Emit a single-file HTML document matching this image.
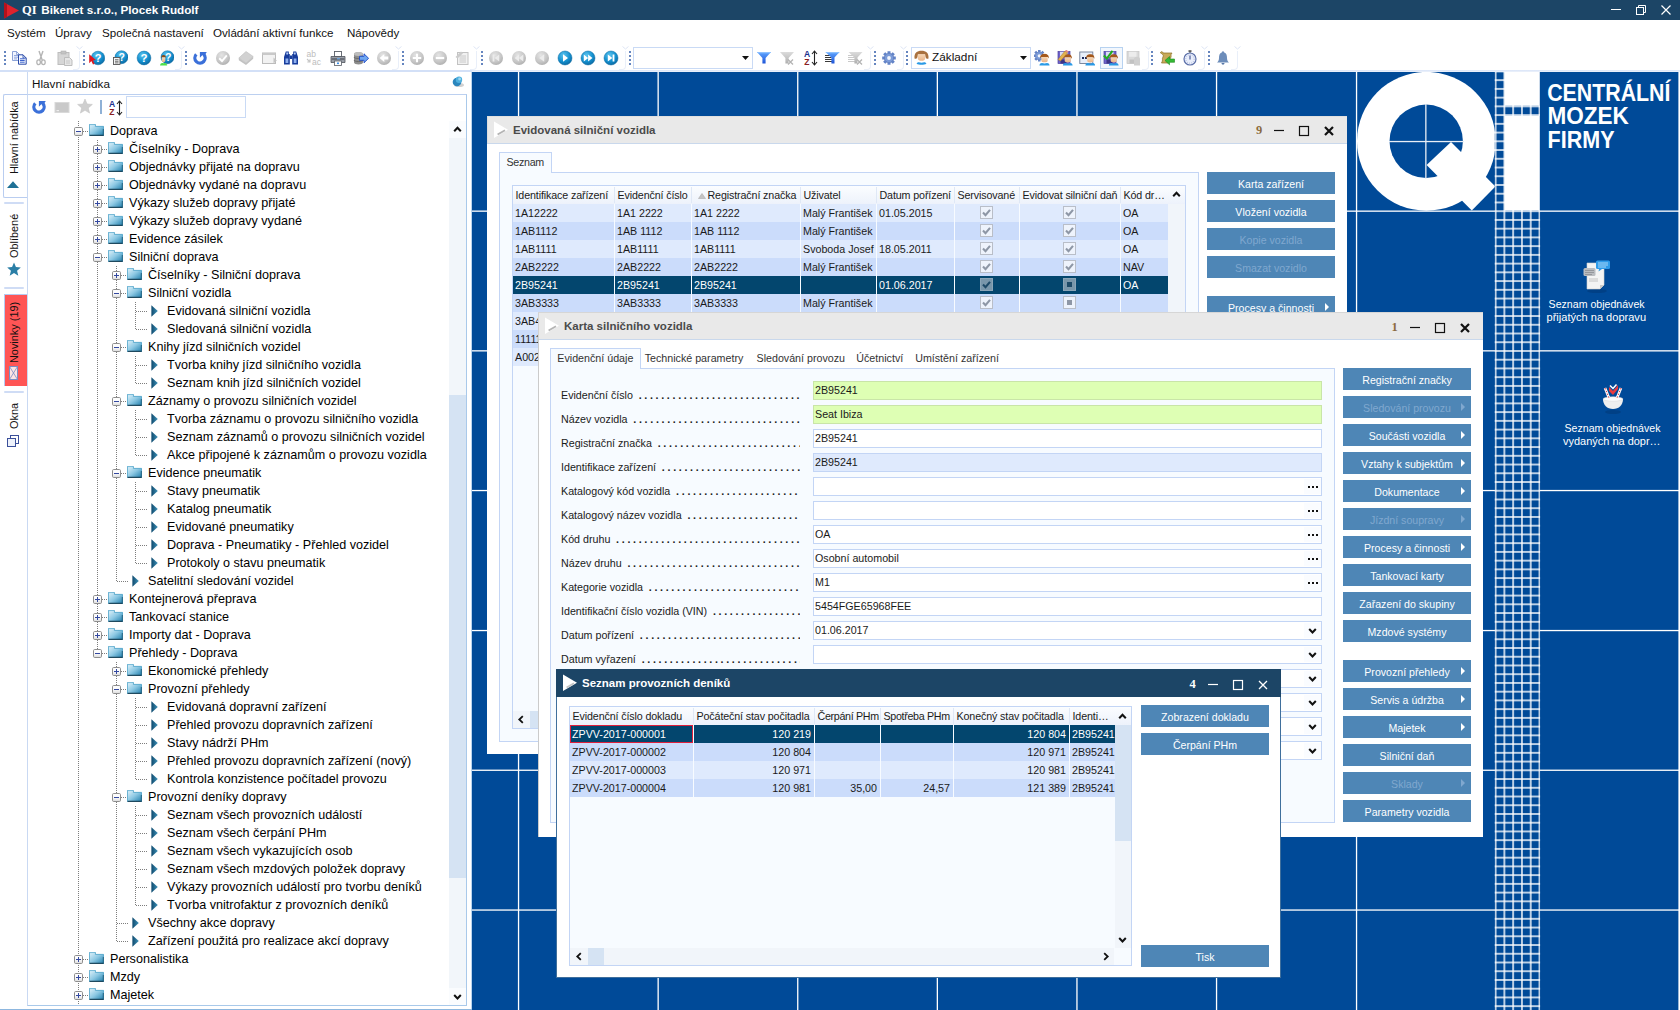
<!DOCTYPE html>
<html><head><meta charset="utf-8"><title>QI</title>
<style>
*{box-sizing:border-box;margin:0;padding:0}
html,body{width:1680px;height:1010px;overflow:hidden;background:#fff}
body{font-family:"Liberation Sans",sans-serif;font-size:10.7px;color:#1a1a1a;position:relative}
.a{position:absolute}
.t{position:absolute;white-space:pre;line-height:1}
.sf{font-family:"Liberation Serif",serif}
.tree .t{font-size:12.6px;color:#000}
.btn{position:absolute;background:#4e86b6;color:#fff;font-size:10.6px;text-align:center;height:22px;line-height:25px;width:128px;white-space:pre}
.btn.dis{color:#80a8cf}
.btn i{position:absolute;right:6px;top:6.5px;width:0;height:0;border-left:4.5px solid #fff;border-top:4.5px solid transparent;border-bottom:4.5px solid transparent}
.btn.dis i{border-left-color:#80a8cf}
.fld{position:absolute;height:19px;border:1px solid #c3d5f5;background:#fff;font-size:10.7px;line-height:16px;padding-left:1px;white-space:pre}
.lbl{position:absolute;font-size:10.7px;white-space:pre;line-height:1}
.cell{position:absolute;height:18px;line-height:18px;font-size:10.7px;white-space:pre;overflow:hidden}
.hd{position:absolute;height:18px;line-height:18px;font-size:10.7px;white-space:pre;overflow:hidden;color:#1a1a1a;letter-spacing:-0.12px}
</style></head><body>

<div class="a" style="left:0;top:0;width:1680px;height:20px;background:#1c4566"></div>
<svg class="a" style="left:2px;top:1px" width="18" height="18" viewBox="0 0 18 18"><path d="M2 1.5 L17 9.5 L2 17.5 Z" fill="#e0222c"/><path d="M2 1.5 L5 3 L5 16 L2 17.5Z" fill="#b5121c"/></svg>
<div class="t" style="left:22px;top:3.5px;font-size:12.5px;font-weight:700;color:#fff;font-family:'Liberation Serif',serif">QI</div>
<div class="t" style="left:41.3px;top:4px;font-size:11.7px;font-weight:700;color:#fff">Bikenet s.r.o., Plocek Rudolf</div>
<svg class="a" style="left:1605px;top:0" width="75" height="20" viewBox="0 0 75 20" fill="none" stroke="#fff" stroke-width="1"><path d="M6 9.5 H16"/><rect x="31.5" y="7.5" width="7" height="7"/><path d="M33.5 7.5 V5.5 H40.5 V12.5 H38.5"/><path d="M56.5 5.5 L65.5 14.5 M65.5 5.5 L56.5 14.5" stroke-width="1.2"/></svg>
<div class="t" style="left:7px;top:27px;font-size:11.6px;color:#111">Systém</div>
<div class="t" style="left:55px;top:27px;font-size:11.6px;color:#111">Úpravy</div>
<div class="t" style="left:102px;top:27px;font-size:11.6px;color:#111">Společná nastavení</div>
<div class="t" style="left:213px;top:27px;font-size:11.6px;color:#111">Ovládání aktivní funkce</div>
<div class="t" style="left:347px;top:27px;font-size:11.6px;color:#111">Nápovědy</div>
<svg width="0" height="0" style="position:absolute"><defs><radialGradient id="hb" cx="0.4" cy="0.3" r="0.8"><stop offset="0" stop-color="#5cc3ee"/><stop offset="0.55" stop-color="#1390cf"/><stop offset="1" stop-color="#0a5f96"/></radialGradient><radialGradient id="gb" cx="0.4" cy="0.3" r="0.8"><stop offset="0" stop-color="#e4e4e4"/><stop offset="0.6" stop-color="#c6c6c6"/><stop offset="1" stop-color="#a9a9a9"/></radialGradient><linearGradient id="fb" x1="0" y1="0" x2="0" y2="1"><stop offset="0" stop-color="#5fa5ff"/><stop offset="1" stop-color="#1f55d8"/></linearGradient><linearGradient id="fgr" x1="0" y1="0" x2="0" y2="1"><stop offset="0" stop-color="#dcdcdc"/><stop offset="1" stop-color="#b0b0b0"/></linearGradient><linearGradient id="skin" x1="0" y1="0" x2="0" y2="1"><stop offset="0" stop-color="#f7d7b5"/><stop offset="1" stop-color="#e8b48a"/></linearGradient><symbol id="usr" viewBox="0 0 12 14"><path d="M1.2 5.5 C0.8 2 3 0.3 6 0.3 C9 0.3 11.2 2 10.8 5.5 L9.5 4 H2.5 Z" fill="#a4581c"/><path d="M2.4 3.8 H9.6 V8 C9.6 10.4 2.4 10.4 2.4 8 Z" fill="url(#skin)"/><path d="M0.3 13.3 C0.8 10.4 3 10 6 11.3 C9 10 11.2 10.4 11.7 13.3 Z" fill="#2a9ae6"/></symbol></defs></svg>
<div class="a" style="left:0;top:70px;width:1680px;height:2px;background:linear-gradient(#d9e4f8,#edf2fb)"></div>
<div class="a" style="left:4px;top:51px;width:2px;height:2px;background:#6585bf;box-shadow:0 4px 0 #6585bf,0 8px 0 #6585bf,0 12px 0 #6585bf"></div>
<svg class="a" style="left:9.0px;top:50.0px" width="20" height="16" viewBox="0 0 20 16"><path d="M3.5 1.5 H7.5 L10.5 4.5 V10.5 H3.5 Z" fill="#f1f5ff" stroke="#7f98d2" stroke-width="0.9"/><path d="M7.5 1.5 V4.5 H10.5" fill="none" stroke="#7f98d2" stroke-width="0.8"/><path d="M5 5.5 H9 M5 7.2 H9 M5 8.9 H8" stroke="#8aa2da" stroke-width="0.9"/><path d="M9.5 4.8 H14 L17.2 8 V14.2 H9.5 Z" fill="#f6f9ff" stroke="#2a4aa8" stroke-width="1"/><path d="M14 4.8 V8 H17.2" fill="none" stroke="#2a4aa8" stroke-width="0.8"/><path d="M11 8.8 H15.7 M11 10.5 H15.7 M11 12.2 H15.7" stroke="#3b62cc" stroke-width="1"/></svg>
<svg class="a" style="left:33.0px;top:50.0px" width="16" height="16" viewBox="0 0 16 16"><path d="M6 1 L9.2 10 M10 1 L6.8 10" stroke="#b5b5b5" stroke-width="1.4" fill="none"/><ellipse cx="5.6" cy="12.3" rx="1.8" ry="2.4" fill="none" stroke="#b5b5b5" stroke-width="1.3"/><ellipse cx="10.4" cy="12.3" rx="1.8" ry="2.4" fill="none" stroke="#b5b5b5" stroke-width="1.3"/></svg>
<svg class="a" style="left:57.0px;top:50.0px" width="16" height="16" viewBox="0 0 16 16"><rect x="1" y="2.5" width="11" height="12" fill="#d6d6d6" stroke="#bdbdbd"/><rect x="4" y="1" width="5" height="3" fill="#c4c4c4" stroke="#b0b0b0" stroke-width="0.6"/><path d="M7.5 7.5 H12.5 L15 10 V15.5 H7.5 Z" fill="#e6e6e6" stroke="#bdbdbd"/><path d="M9 11 H13 M9 13 H13" stroke="#c4c4c4" stroke-width="0.9"/></svg>
<div class="a" style="left:73px;top:51px;width:7px;height:19px;border-right:1px solid #e9eff9;border-bottom:1px solid #e9eff9;border-radius:0 0 4px 0"></div>
<svg class="a" style="left:76px;top:46px" width="7" height="4"><path d="M0.5 0.5 L3.5 3 L6.5 0.5" fill="none" stroke="#d5e0f2" stroke-width="0.8"/></svg>
<div class="a" style="left:83px;top:51px;width:2px;height:2px;background:#6585bf;box-shadow:0 4px 0 #6585bf,0 8px 0 #6585bf,0 12px 0 #6585bf"></div>
<svg class="a" style="left:89.0px;top:50.0px" width="16" height="16" viewBox="0 0 16 16"><circle cx="9" cy="8" r="6.8" fill="url(#hb)" stroke="#0b6aa3" stroke-width="0.5"/><text x="9" y="12" font-family="Liberation Sans" font-weight="700" font-size="11" fill="#fff" text-anchor="middle">?</text><path d="M0.2 4.2 V13.2 L2.4 11 L4 14.6 L5.6 13.8 L4 10.4 L6.8 10.1 Z" fill="#e3161d"/></svg>
<svg class="a" style="left:112.0px;top:50.0px" width="16" height="16" viewBox="0 0 16 16"><circle cx="9.5" cy="7.2" r="6.5" fill="url(#hb)" stroke="#0b6aa3" stroke-width="0.5"/><text x="9.8" y="11" font-family="Liberation Sans" font-weight="700" font-size="10.5" fill="#fff" text-anchor="middle">?</text><rect x="1.5" y="7.5" width="6.5" height="7" fill="#f4f4f4" stroke="#555" stroke-width="0.9"/><path d="M3 9.7 H6.5 M3 11.3 H6.5 M3 12.9 H6.5" stroke="#555" stroke-width="0.8"/></svg>
<svg class="a" style="left:136.0px;top:50.0px" width="16" height="16" viewBox="0 0 16 16"><circle cx="8" cy="8" r="6.9" fill="url(#hb)" stroke="#0b6aa3" stroke-width="0.5"/><text x="8" y="12.2" font-family="Liberation Sans" font-weight="700" font-size="11.5" fill="#fff" text-anchor="middle">?</text></svg>
<svg class="a" style="left:158.0px;top:50.0px" width="16" height="16" viewBox="0 0 16 16"><circle cx="9.5" cy="7.2" r="6.5" fill="url(#hb)" stroke="#0b6aa3" stroke-width="0.5"/><text x="10.3" y="10.8" font-family="Liberation Sans" font-weight="700" font-size="10.5" fill="#fff" text-anchor="middle">?</text><path d="M2 15.5 C2.3 12.8 4 12.5 5.6 13.2 C7.2 12.5 8.9 12.8 9.2 15.5Z" fill="#4de04a"/><path d="M3.4 8 C3.2 5.6 4.3 5 5.6 5 C6.9 5 8 5.6 7.8 8 L7.2 7.4 H4Z" fill="#8a4a17"/><path d="M3.9 7.3 H7.3 V10.5 C7.3 12.6 3.9 12.6 3.9 10.5Z" fill="url(#skin)"/></svg>
<div class="a" style="left:175px;top:51px;width:7px;height:19px;border-right:1px solid #e9eff9;border-bottom:1px solid #e9eff9;border-radius:0 0 4px 0"></div>
<svg class="a" style="left:178px;top:46px" width="7" height="4"><path d="M0.5 0.5 L3.5 3 L6.5 0.5" fill="none" stroke="#d5e0f2" stroke-width="0.8"/></svg>
<div class="a" style="left:185px;top:51px;width:2px;height:2px;background:#6585bf;box-shadow:0 4px 0 #6585bf,0 8px 0 #6585bf,0 12px 0 #6585bf"></div>
<svg class="a" style="left:192.0px;top:50.0px" width="16" height="16" viewBox="0 0 16 16"><path d="M4.3 4.3 A5.15 5.15 0 1 0 11.6 4.2" fill="none" stroke="#3b70d9" stroke-width="3.3"/><path d="M7.9 1.9 H14.8 L12.5 5.5 L10.5 5 L7.9 7.7 Z" fill="#3b70d9"/></svg>
<svg class="a" style="left:215.0px;top:50.0px" width="16" height="16" viewBox="0 0 16 16"><circle cx="8" cy="8" r="7" fill="url(#gb)"/><path d="M4.2 8.3 L7 11 L11.8 5.3" fill="none" stroke="#fff" stroke-width="1.9"/></svg>
<svg class="a" style="left:238.0px;top:50.0px" width="16" height="16" viewBox="0 0 16 16"><path d="M0.8 8 L8 1.5 L15.2 6.5 L8 13 Z" fill="#d2d2d2" stroke="#bdbdbd" stroke-width="0.6"/><path d="M0.8 8 L8 13 L15.2 6.5 V8.8 L8 15 L0.8 10.2Z" fill="#c2c2c2"/></svg>
<svg class="a" style="left:261.0px;top:50.0px" width="16" height="16" viewBox="0 0 16 16"><rect x="1.5" y="3" width="13" height="10.5" fill="#f2f2f2" stroke="#bcbcbc"/><rect x="1.5" y="3" width="13" height="2" fill="#c9c9c9"/><path d="M12.5 7.5 L15.8 10.5 L12.5 13.5Z" fill="#c4c4c4"/></svg>
<svg class="a" style="left:283.0px;top:50.0px" width="16" height="16" viewBox="0 0 16 16"><path d="M2.8 1.5 H5.8 V4 H6.8 V14.5 H1 V7 Z M10.2 1.5 H13.2 L15 7 V14.5 H9.2 V4 H10.2Z" fill="#173c9c"/><rect x="6.8" y="5.5" width="2.4" height="3.5" fill="#173c9c"/><path d="M2.5 8.5 H5.3 V13 H2.5Z M10.7 8.5 H13.5 V13 H10.7Z" fill="#8fb0ee"/><path d="M3.3 2.5 H5 V4.5 H3.3Z M11 2.5 H12.7 V4.5 H11Z" fill="#b5cbf5"/></svg>
<svg class="a" style="left:306.0px;top:50.0px" width="16" height="16" viewBox="0 0 16 16"><text x="0.5" y="7" font-family="Liberation Sans" font-size="8.5" fill="#bdbdbd">ab</text><text x="6" y="15" font-family="Liberation Sans" font-size="8.5" fill="#bdbdbd">ac</text><path d="M1 9 L4 12 M4 9.3 V12 H1.3" stroke="#c6c6c6" stroke-width="1.1" fill="none"/></svg>
<svg class="a" style="left:330.0px;top:50.0px" width="16" height="16" viewBox="0 0 16 16"><rect x="4.5" y="1.5" width="7" height="5" fill="#fff" stroke="#5a5f68" stroke-width="0.9"/><path d="M1 6.5 H15 V12.5 H1Z" fill="#9a9fa8" stroke="#4f545c" stroke-width="0.8"/><rect x="1.5" y="8" width="13" height="2" fill="#6a6f78"/><rect x="4.5" y="11" width="7" height="4.5" fill="#fff" stroke="#5a5f68" stroke-width="0.8"/><rect x="7" y="12.5" width="2" height="1.6" fill="#3a8ee6"/><rect x="7" y="8.3" width="3" height="1" fill="#6fb6ff"/></svg>
<svg class="a" style="left:353.0px;top:50.0px" width="16" height="16" viewBox="0 0 16 16"><path d="M1 4 C1 1.6 10 1.6 10 4 V12.5 C10 15 1 15 1 12.5Z" fill="#8d8d8d"/><ellipse cx="5.5" cy="4" rx="4.5" ry="1.9" fill="#bdbdbd"/><path d="M1 7 C1 9 10 9 10 7 M1 10 C1 12 10 12 10 10" stroke="#5e5e5e" stroke-width="0.8" fill="none"/><path d="M6.5 6.3 H11 V3.8 L15.6 8.3 L11 12.8 V10.3 H6.5Z" fill="#6ea6f0" stroke="#1d49c6" stroke-width="0.9"/></svg>
<svg class="a" style="left:376.0px;top:50.0px" width="16" height="16" viewBox="0 0 16 16"><circle cx="8" cy="8" r="7" fill="url(#gb)"/><path d="M3.6 8 L8.3 4 V6.4 H12.3 V9.6 H8.3 V12Z" fill="#fff"/></svg>
<div class="a" style="left:392px;top:51px;width:7px;height:19px;border-right:1px solid #e9eff9;border-bottom:1px solid #e9eff9;border-radius:0 0 4px 0"></div>
<svg class="a" style="left:395px;top:46px" width="7" height="4"><path d="M0.5 0.5 L3.5 3 L6.5 0.5" fill="none" stroke="#d5e0f2" stroke-width="0.8"/></svg>
<div class="a" style="left:402px;top:51px;width:2px;height:2px;background:#6585bf;box-shadow:0 4px 0 #6585bf,0 8px 0 #6585bf,0 12px 0 #6585bf"></div>
<svg class="a" style="left:409.0px;top:50.0px" width="16" height="16" viewBox="0 0 16 16"><circle cx="8" cy="8" r="7" fill="url(#gb)"/><path d="M8 3.8 V12.2 M3.8 8 H12.2" stroke="#fff" stroke-width="2"/></svg>
<svg class="a" style="left:432.0px;top:50.0px" width="16" height="16" viewBox="0 0 16 16"><circle cx="8" cy="8" r="7" fill="url(#gb)"/><path d="M3.8 8 H12.2" stroke="#fff" stroke-width="2.2"/></svg>
<svg class="a" style="left:454.0px;top:50.0px" width="16" height="16" viewBox="0 0 16 16"><rect x="3.5" y="2.5" width="10.5" height="12" fill="#f1f1f1" stroke="#c2c2c2"/><path d="M5.5 6 H12 M5.5 8 H12 M5.5 10 H12 M5.5 12 H12" stroke="#c6c6c6" stroke-width="0.9"/><path d="M1.5 7 L7 1.5 L9 3.2 L3.5 8.5Z" fill="#cbcbcb"/></svg>
<div class="a" style="left:470px;top:51px;width:7px;height:19px;border-right:1px solid #e9eff9;border-bottom:1px solid #e9eff9;border-radius:0 0 4px 0"></div>
<svg class="a" style="left:473px;top:46px" width="7" height="4"><path d="M0.5 0.5 L3.5 3 L6.5 0.5" fill="none" stroke="#d5e0f2" stroke-width="0.8"/></svg>
<div class="a" style="left:481px;top:51px;width:2px;height:2px;background:#6585bf;box-shadow:0 4px 0 #6585bf,0 8px 0 #6585bf,0 12px 0 #6585bf"></div>
<svg class="a" style="left:488.0px;top:50.0px" width="16" height="16" viewBox="0 0 16 16"><circle cx="8" cy="8" r="7" fill="url(#gb)"/><g fill="#ececec"><rect x="4.6" y="4.5" width="1.8" height="7"/><path d="M11.2 4.5 L6.6 8 L11.2 11.5Z"/></g></svg>
<svg class="a" style="left:511.0px;top:50.0px" width="16" height="16" viewBox="0 0 16 16"><circle cx="8" cy="8" r="7" fill="url(#gb)"/><g fill="#ececec"><path d="M8 4.5 L3.6 8 L8 11.5Z M12.3 4.5 L7.9 8 L12.3 11.5Z"/></g></svg>
<svg class="a" style="left:534.0px;top:50.0px" width="16" height="16" viewBox="0 0 16 16"><circle cx="8" cy="8" r="7" fill="url(#gb)"/><g fill="#ececec"><path d="M10.2 4.3 L5.2 8 L10.2 11.7Z"/></g></svg>
<svg class="a" style="left:557.0px;top:50.0px" width="16" height="16" viewBox="0 0 16 16"><circle cx="8" cy="8" r="7" fill="url(#hb)" stroke="#0b6aa3" stroke-width="0.5"/><g fill="#fff"><path d="M6 4.3 L11 8 L6 11.7Z"/></g></svg>
<svg class="a" style="left:580.0px;top:50.0px" width="16" height="16" viewBox="0 0 16 16"><circle cx="8" cy="8" r="7" fill="url(#hb)" stroke="#0b6aa3" stroke-width="0.5"/><g fill="#fff"><path d="M3.8 4.5 L8.2 8 L3.8 11.5Z M8.1 4.5 L12.5 8 L8.1 11.5Z"/></g></svg>
<svg class="a" style="left:603.0px;top:50.0px" width="16" height="16" viewBox="0 0 16 16"><circle cx="8" cy="8" r="7" fill="url(#hb)" stroke="#0b6aa3" stroke-width="0.5"/><g fill="#fff"><rect x="9.6" y="4.5" width="1.8" height="7"/><path d="M4.8 4.5 L9.4 8 L4.8 11.5Z"/></g></svg>
<div class="a" style="left:619px;top:51px;width:7px;height:19px;border-right:1px solid #e9eff9;border-bottom:1px solid #e9eff9;border-radius:0 0 4px 0"></div>
<svg class="a" style="left:622px;top:46px" width="7" height="4"><path d="M0.5 0.5 L3.5 3 L6.5 0.5" fill="none" stroke="#d5e0f2" stroke-width="0.8"/></svg>
<div class="a" style="left:629px;top:51px;width:2px;height:2px;background:#6585bf;box-shadow:0 4px 0 #6585bf,0 8px 0 #6585bf,0 12px 0 #6585bf"></div>
<div class="a" style="left:633px;top:47px;width:120px;height:22px;border:1px solid #c9daf5;background:#fff"></div>
<svg class="a" style="left:742px;top:56px" width="7" height="4"><path d="M0 0 H7 L3.5 4Z" fill="#111"/></svg>
<svg class="a" style="left:756.0px;top:50.0px" width="16" height="16" viewBox="0 0 16 16"><path d="M1 2 H15 L9.6 8 V13.5 H6.4 V8Z" fill="url(#fb)"/><path d="M1 2 H15 L14 3.2 H2Z" fill="#8cc0ff"/></svg>
<svg class="a" style="left:779.0px;top:50.0px" width="16" height="16" viewBox="0 0 16 16"><path d="M1 2 H15 L9.6 8 V13.5 H6.4 V8Z" fill="url(#fgr)"/><path d="M9 9.5 L14 14.5 M14 9.5 L9 14.5" stroke="#b3b3b3" stroke-width="1.3"/></svg>
<svg class="a" style="left:804.0px;top:50.0px" width="16" height="16" viewBox="0 0 16 16"><text x="0" y="7.3" font-family="Liberation Sans" font-weight="700" font-size="8.5" fill="#1a2f8c">A</text><text x="0.2" y="15.3" font-family="Liberation Sans" font-weight="700" font-size="8.5" fill="#8a1f1f">Z</text><path d="M10.5 1.5 V14.5 M8 4 L10.5 1 L13 4 M8 12 L10.5 15 L13 12" stroke="#222" stroke-width="1.1" fill="none"/></svg>
<svg class="a" style="left:824.0px;top:50.0px" width="16" height="16" viewBox="0 0 16 16"><path d="M1 5.5 H7 M1 7.5 H7.5 M1 9.5 H8 M1 11.5 H8" stroke="#3a3a3a" stroke-width="1"/><path d="M1.5 2 H15.5 L10.5 7.6 V13.5 H7.4 V7.6Z" fill="url(#fb)"/><path d="M1.5 2 H15.5 L14.5 3.2 H2.5Z" fill="#8cc0ff"/></svg>
<svg class="a" style="left:847.0px;top:50.0px" width="16" height="16" viewBox="0 0 16 16"><path d="M1 5.5 H7 M1 7.5 H7.5 M1 9.5 H8 M1 11.5 H8" stroke="#c9c9c9" stroke-width="1"/><path d="M1.5 2 H15.5 L10.5 7.6 V13.5 H7.4 V7.6Z" fill="url(#fgr)"/><path d="M10 9.5 L15 14.5 M15 9.5 L10 14.5" stroke="#b3b3b3" stroke-width="1.3"/></svg>
<div class="a" style="left:864px;top:51px;width:7px;height:19px;border-right:1px solid #e9eff9;border-bottom:1px solid #e9eff9;border-radius:0 0 4px 0"></div>
<svg class="a" style="left:867px;top:46px" width="7" height="4"><path d="M0.5 0.5 L3.5 3 L6.5 0.5" fill="none" stroke="#d5e0f2" stroke-width="0.8"/></svg>
<div class="a" style="left:874px;top:51px;width:2px;height:2px;background:#6585bf;box-shadow:0 4px 0 #6585bf,0 8px 0 #6585bf,0 12px 0 #6585bf"></div>
<svg class="a" style="left:881.0px;top:50.0px" width="16" height="16" viewBox="0 0 16 16"><circle cx="8" cy="8" r="4.6" fill="#6f8fd0" stroke="#4a66a8" stroke-width="0.8"/><g stroke="#6283c7" stroke-width="3" stroke-linecap="butt"><path d="M8 1.2 V3.6 M8 12.4 V14.8 M1.2 8 H3.6 M12.4 8 H14.8 M3.2 3.2 L4.9 4.9 M11.1 11.1 L12.8 12.8 M3.2 12.8 L4.9 11.1 M11.1 4.9 L12.8 3.2"/></g><circle cx="8" cy="8" r="4.2" fill="#7b9bd8"/><circle cx="8" cy="8" r="1.9" fill="#f2f6fc"/></svg>
<div class="a" style="left:897px;top:51px;width:7px;height:19px;border-right:1px solid #e9eff9;border-bottom:1px solid #e9eff9;border-radius:0 0 4px 0"></div>
<svg class="a" style="left:900px;top:46px" width="7" height="4"><path d="M0.5 0.5 L3.5 3 L6.5 0.5" fill="none" stroke="#d5e0f2" stroke-width="0.8"/></svg>
<div class="a" style="left:906px;top:51px;width:2px;height:2px;background:#6585bf;box-shadow:0 4px 0 #6585bf,0 8px 0 #6585bf,0 12px 0 #6585bf"></div>
<div class="a" style="left:911px;top:47px;width:120px;height:22px;border:1px solid #c9daf5;background:#fff"></div>
<svg class="a" style="left:914px;top:50px" width="15" height="15" viewBox="0 0 15 15"><path d="M0.5 8.5 C0 3 3 0.8 7.5 0.8 C12 0.8 15 3 14.5 8.5 C13 9.3 12 8.5 11.5 7 L11 4.5 H4 L3.5 7 C3 8.5 2 9.3 0.5 8.5Z" fill="#a9713f"/><path d="M3.8 4.3 H11.2 V8.5 C11.2 11.6 3.8 11.6 3.8 8.5Z" fill="url(#skin)"/><path d="M2.5 13.8 C3.5 11.5 5.5 12 7.5 12.8 C9.5 12 11.5 11.5 12.5 13.8 C10 15.2 5 15.2 2.5 13.8Z" fill="#2a9ae6"/></svg>
<div class="t" style="left:932px;top:52px;font-size:11.8px;color:#111">Základní</div>
<svg class="a" style="left:1019.5px;top:56px" width="7" height="4"><path d="M0 0 H7 L3.5 4Z" fill="#111"/></svg>
<svg class="a" style="left:1034.0px;top:50.0px" width="16" height="16" viewBox="0 0 16 16"><g transform="translate(-1.5,-1) scale(0.85)"><circle cx="8" cy="8" r="4.6" fill="#6f8fd0" stroke="#4a66a8" stroke-width="0.8"/><g stroke="#6283c7" stroke-width="3" stroke-linecap="butt"><path d="M8 1.2 V3.6 M8 12.4 V14.8 M1.2 8 H3.6 M12.4 8 H14.8 M3.2 3.2 L4.9 4.9 M11.1 11.1 L12.8 12.8 M3.2 12.8 L4.9 11.1 M11.1 4.9 L12.8 3.2"/></g><circle cx="8" cy="8" r="4.2" fill="#7b9bd8"/><circle cx="8" cy="8" r="1.9" fill="#f2f6fc"/></g><use href="#usr" x="5" y="3.5" width="11" height="12.5"/></svg>
<svg class="a" style="left:1057.0px;top:50.0px" width="16" height="16" viewBox="0 0 16 16"><rect x="1" y="1.5" width="12" height="12" fill="#6f63c9" stroke="#4a3fa0" stroke-width="0.7"/><rect x="3" y="1.8" width="7.5" height="5" fill="#d9dcf5"/><rect x="3.5" y="9.5" width="6" height="4" fill="#3b3486"/><use href="#usr" x="5.5" y="4" width="10.5" height="12"/><path d="M1 9.5 L8 1 L10.5 2.8 L3.5 11Z" fill="#e3b14f" stroke="#a37a26" stroke-width="0.5"/><path d="M8 1 L9.2 -0.3 L11.6 1.5 L10.5 2.8Z" fill="#e58b86"/></svg>
<svg class="a" style="left:1079.0px;top:50.0px" width="16" height="16" viewBox="0 0 16 16"><rect x="0.8" y="2" width="13" height="11.5" fill="#e8eef9" stroke="#6f7c96" stroke-width="0.9"/><rect x="3" y="7" width="2" height="2" fill="#1e2c5e"/><rect x="6" y="7" width="2" height="2" fill="#1e2c5e"/><use href="#usr" x="6" y="4" width="10.5" height="12"/></svg>
<div class="a" style="left:1100px;top:47px;width:23px;height:22px;border:1px solid #b7d2f0;background:#f2f7fd"></div>
<svg class="a" style="left:1103.0px;top:50.0px" width="16" height="16" viewBox="0 0 16 16"><rect x="1" y="1.5" width="12" height="12" fill="#6f63c9" stroke="#4a3fa0" stroke-width="0.7"/><rect x="3" y="1.8" width="7.5" height="5" fill="#d9dcf5"/><rect x="3.5" y="9.5" width="6" height="4" fill="#3b3486"/><use href="#usr" x="5.5" y="4" width="10.5" height="12"/><path d="M0.8 5.5 L3.8 8.5 L9.5 0.8" fill="none" stroke="#1fae1f" stroke-width="2"/></svg>
<svg class="a" style="left:1126.0px;top:50.0px" width="16" height="16" viewBox="0 0 16 16"><rect x="1" y="1.5" width="12" height="12" fill="#dadada" stroke="#c4c4c4" stroke-width="0.7"/><rect x="3" y="1.8" width="7.5" height="5" fill="#ececec"/><rect x="3.5" y="9.5" width="6" height="4" fill="#c2c2c2"/><path d="M8 15.5 V9 C8 6 14 6 14 9 V15.5Z" fill="#cfcfcf"/></svg>
<div class="a" style="left:1142px;top:51px;width:7px;height:19px;border-right:1px solid #e9eff9;border-bottom:1px solid #e9eff9;border-radius:0 0 4px 0"></div>
<svg class="a" style="left:1145px;top:46px" width="7" height="4"><path d="M0.5 0.5 L3.5 3 L6.5 0.5" fill="none" stroke="#d5e0f2" stroke-width="0.8"/></svg>
<div class="a" style="left:1151px;top:51px;width:2px;height:2px;background:#6585bf;box-shadow:0 4px 0 #6585bf,0 8px 0 #6585bf,0 12px 0 #6585bf"></div>
<svg class="a" style="left:1159.0px;top:50.0px" width="16" height="16" viewBox="0 0 16 16"><path d="M1.5 3 C1.5 1 4 1.5 4 3 H13 C11 5 13 6.5 11.5 8 L9 13 H2.5 C4.5 10 2.5 9 4 7 C5 5 3.5 4 1.5 3Z" fill="#c8ab5a" stroke="#8a6e22" stroke-width="0.7"/><path d="M6 10.5 L10.5 6.5 V9 H15.5 V12.3 H10.5 V14.8Z" fill="#35b935" stroke="#1d8a1d" stroke-width="0.6"/></svg>
<svg class="a" style="left:1182.0px;top:50.0px" width="16" height="16" viewBox="0 0 16 16"><rect x="6.5" y="0.3" width="3" height="1.5" fill="#444"/><rect x="7.5" y="1.5" width="1" height="1.5" fill="#444"/><circle cx="8" cy="9" r="6" fill="#e9eefb" stroke="#5b6fa8" stroke-width="1.2"/><circle cx="8" cy="9" r="4.2" fill="none" stroke="#8e9cc9" stroke-width="0.8" stroke-dasharray="0.8 1.4"/><path d="M8 5.5 V9.5" stroke="#2a3f86" stroke-width="1"/></svg>
<div class="a" style="left:1198px;top:51px;width:7px;height:19px;border-right:1px solid #e9eff9;border-bottom:1px solid #e9eff9;border-radius:0 0 4px 0"></div>
<svg class="a" style="left:1201px;top:46px" width="7" height="4"><path d="M0.5 0.5 L3.5 3 L6.5 0.5" fill="none" stroke="#d5e0f2" stroke-width="0.8"/></svg>
<div class="a" style="left:1208px;top:51px;width:2px;height:2px;background:#6585bf;box-shadow:0 4px 0 #6585bf,0 8px 0 #6585bf,0 12px 0 #6585bf"></div>
<svg class="a" style="left:1215.0px;top:50.0px" width="16" height="16" viewBox="0 0 16 16"><path d="M8 1.2 C9 1.2 9.2 2 9.2 2.5 C11.5 3.3 12 5.5 12 8 C12 10.5 12.8 11.5 14 12.5 H2 C3.2 11.5 4 10.5 4 8 C4 5.5 4.5 3.3 6.8 2.5 C6.8 2 7 1.2 8 1.2Z" fill="#6d8dba"/><path d="M6.5 13 H9.5 C9.5 15.3 6.5 15.3 6.5 13Z" fill="#5878a8"/></svg>
<div class="a" style="left:1231px;top:51px;width:7px;height:19px;border-right:1px solid #e9eff9;border-bottom:1px solid #e9eff9;border-radius:0 0 4px 0"></div>
<svg class="a" style="left:1234px;top:46px" width="7" height="4"><path d="M0.5 0.5 L3.5 3 L6.5 0.5" fill="none" stroke="#d5e0f2" stroke-width="0.8"/></svg>
<svg class="a" style="left:31.0px;top:98.5px" width="16" height="16" viewBox="0 0 16 16"><path d="M4.3 4.3 A5.15 5.15 0 1 0 11.6 4.2" fill="none" stroke="#3b70d9" stroke-width="3.3"/><path d="M7.9 1.9 H14.8 L12.5 5.5 L10.5 5 L7.9 7.7 Z" fill="#3b70d9"/></svg>
<svg class="a" style="left:54.0px;top:98.5px" width="16" height="16" viewBox="0 0 16 16"><rect x="1" y="3.5" width="14" height="10" fill="#c9c9c9" stroke="#d9d9d9"/><rect x="2.5" y="11" width="2.5" height="1.2" fill="#eee"/></svg>
<svg class="a" style="left:77.0px;top:98.0px" width="16" height="16" viewBox="0 0 16 16"><path d="M8 1 L10.1 6 L15.4 6.4 L11.3 9.9 L12.6 15.1 L8 12.3 L3.4 15.1 L4.7 9.9 L0.6 6.4 L5.9 6Z" fill="#cfcfcf" stroke="#c0c0c0" stroke-width="0.5"/></svg>
<div class="a" style="left:100px;top:100px;width:2px;height:14px;background:#8fb1d6"></div>
<svg class="a" style="left:108.5px;top:99.5px" width="16" height="16" viewBox="0 0 16 16"><text x="0" y="7.3" font-family="Liberation Sans" font-weight="700" font-size="8.5" fill="#1a2f8c">A</text><text x="0.2" y="15.3" font-family="Liberation Sans" font-weight="700" font-size="8.5" fill="#8a1f1f">Z</text><path d="M10.5 1.5 V14.5 M8 4 L10.5 1 L13 4 M8 12 L10.5 15 L13 12" stroke="#222" stroke-width="1.1" fill="none"/></svg>
<svg class="a" style="left:450px;top:74px" width="16" height="16" viewBox="0 0 16 16"><ellipse cx="9" cy="11" rx="5" ry="2" fill="#000" opacity="0.18"/><circle cx="7" cy="8" r="4.3" fill="#2b86bd"/><circle cx="9" cy="5.8" r="3.2" fill="#4fb0de"/><circle cx="9.6" cy="5" r="1.4" fill="#9ad6f0"/></svg>
<div class="a" style="left:27px;top:72px;width:1px;height:22px;background:#c9d9f3"></div>
<div class="a" style="left:27px;top:197px;width:1px;height:808px;background:#c9d9f3"></div>
<div class="a" style="left:3px;top:94px;width:25px;height:104px;border:1px solid #b9cdf0;border-right:none;border-radius:2px 0 0 2px;background:#fff"></div>
<div class="t" style="left:9.4px;top:173.6px;font-size:10.9px;color:#111;transform:rotate(-90deg);transform-origin:left top">Hlavní nabídka</div>
<svg class="a" style="left:7px;top:180.5px" width="12" height="7" viewBox="0 0 12 7"><path d="M0 7 L6 0.3 L12 7Z" fill="#1f7196"/></svg>
<div class="a" style="left:4px;top:202px;width:20px;height:2px;background:#cfdcf5;border-radius:1px"></div>
<div class="t" style="left:9.4px;top:258.2px;font-size:10.9px;color:#111;transform:rotate(-90deg);transform-origin:left top">Oblíbené</div>
<svg class="a" style="left:6.5px;top:261.5px" width="14" height="14" viewBox="0 0 16 16"><path d="M8 0.5 L10.2 5.8 L15.8 6.3 L11.5 10 L12.9 15.6 L8 12.6 L3.1 15.6 L4.5 10 L0.2 6.3 L5.8 5.8Z" fill="#2a7ea6"/></svg>
<div class="a" style="left:4px;top:287px;width:20px;height:2px;background:#cfdcf5;border-radius:1px"></div>
<div class="a" style="left:3.5px;top:293.5px;width:23.5px;height:92.5px;background:#ff5555;border-left:1px solid #b5caf0;border-top:1px solid #b5caf0"></div>
<div class="t" style="left:9.4px;top:362.8px;font-size:10.9px;color:#111;transform:rotate(-90deg);transform-origin:left top">Novinky (19)</div>
<svg class="a" style="left:9px;top:366px" width="9" height="14" viewBox="0 0 9 14"><rect x="0.5" y="0.5" width="8" height="13" fill="#fde4e4" stroke="#7a8ec4"/><path d="M0.5 0.5 L4.5 7 L8.5 0.5 M0.5 13.5 L4.5 7 L8.5 13.5" fill="none" stroke="#7a8ec4" stroke-width="0.8"/></svg>
<div class="a" style="left:4px;top:391px;width:20px;height:2px;background:#cfdcf5;border-radius:1px"></div>
<div class="t" style="left:9.4px;top:428.8px;font-size:10.9px;color:#111;transform:rotate(-90deg);transform-origin:left top">Okna</div>
<svg class="a" style="left:7px;top:434.5px" width="12" height="12" viewBox="0 0 12 12"><rect x="3.5" y="0.5" width="8" height="8" fill="#fff" stroke="#3a4f9a"/><rect x="0.5" y="3.5" width="8" height="8" fill="#eef2fb" stroke="#3a4f9a"/></svg>
<div class="a" style="left:0;top:70px;width:472px;height:2px;background:#d3e0f7"></div>
<div class="t" style="left:32px;top:78px;font-size:11.7px;color:#111">Hlavní nabídka</div>
<div class="a" style="left:27px;top:94px;width:440px;height:912px;border:1px solid #a9c9ea;border-left-color:#c9d9f3;border-top-color:#bcd0f0"></div>
<div class="a" style="left:0;top:1009px;width:472px;height:1px;background:#8db7df"></div>
<div class="a" style="left:471px;top:72px;width:1px;height:937px;background:#b9d4ee"></div>
<div class="a" style="left:126px;top:96px;width:120px;height:22px;border:1px solid #c9daf5;background:#fff"></div>
<div class="a" style="left:449px;top:121px;width:17px;height:884px;background:#f2f6fa"></div>
<div class="a" style="left:449px;top:988px;width:17px;height:17px;background:#fafcfe"></div>
<div class="a" style="left:449px;top:121px;width:17px;height:17px;background:#fafcfe"></div>
<div class="a" style="left:449px;top:395px;width:17px;height:483px;background:#d5e3f3"></div>
<svg class="a" style="left:452px;top:125px" width="11" height="8" viewBox="0 0 11 8"><path d="M2.2 6.3 L5.5 2.8 L8.8 6.3" fill="none" stroke="#111" stroke-width="2"/></svg>
<svg class="a" style="left:452px;top:993px" width="11" height="8" viewBox="0 0 11 8"><path d="M2.2 2 L5.5 5.5 L8.8 2" fill="none" stroke="#111" stroke-width="2"/></svg>
<svg width="0" height="0" style="position:absolute"><defs><linearGradient id="fg" x1="0" y1="0" x2="1" y2="1"><stop offset="0" stop-color="#e2f3fb"/><stop offset="0.5" stop-color="#8cc8e3"/><stop offset="1" stop-color="#1f7eac"/></linearGradient><linearGradient id="ag" x1="0" y1="0" x2="1" y2="0"><stop offset="0" stop-color="#0f4a6e"/><stop offset="1" stop-color="#3f92b8"/></linearGradient><linearGradient id="xg" x1="0" y1="0" x2="0" y2="1"><stop offset="0" stop-color="#fff"/><stop offset="0.5" stop-color="#fafafa"/><stop offset="1" stop-color="#dcdcdc"/></linearGradient><symbol id="fo" viewBox="0 0 15 12"><path d="M0.4 0.4 H6.4 V2.4 H14.6 V11.6 H0.4 Z" fill="url(#fg)" stroke="#3f9bc4" stroke-width="0.8"/><path d="M1 1.3 H5.8" stroke="#bfe3f3" stroke-width="0.8"/><path d="M0.6 11.3 H14.6" stroke="#0f3143" stroke-width="1"/><path d="M14.3 5 V11.6" stroke="#17506d" stroke-width="0.8"/></symbol><symbol id="ar" viewBox="0 0 7 12"><path d="M0.4 0.2 L6.8 6 L0.4 11.8 Z" fill="url(#ag)"/></symbol><symbol id="pl" viewBox="0 0 9 9"><rect x="0.5" y="0.5" width="8" height="8" rx="1.2" fill="url(#xg)" stroke="#8e8e8e"/><path d="M2 4.5 H7 M4.5 2 V7" stroke="#3348a0" stroke-width="1"/></symbol><symbol id="mi" viewBox="0 0 9 9"><rect x="0.5" y="0.5" width="8" height="8" rx="1.2" fill="url(#xg)" stroke="#8e8e8e"/><path d="M2 4.5 H7" stroke="#3348a0" stroke-width="1"/></symbol></defs></svg>
<div class="tree">
<div class="a" style="left:78px;top:121px;width:1px;height:883px;background-image:linear-gradient(#7d7d7d 50%,transparent 50%);background-size:1px 2px"></div>
<div class="a" style="left:97px;top:140px;width:1px;height:514px;background-image:linear-gradient(#7d7d7d 50%,transparent 50%);background-size:1px 2px"></div>
<div class="a" style="left:116px;top:266px;width:1px;height:316px;background-image:linear-gradient(#7d7d7d 50%,transparent 50%);background-size:1px 2px"></div>
<div class="a" style="left:135px;top:302px;width:1px;height:28px;background-image:linear-gradient(#7d7d7d 50%,transparent 50%);background-size:1px 2px"></div>
<div class="a" style="left:135px;top:356px;width:1px;height:28px;background-image:linear-gradient(#7d7d7d 50%,transparent 50%);background-size:1px 2px"></div>
<div class="a" style="left:135px;top:410px;width:1px;height:46px;background-image:linear-gradient(#7d7d7d 50%,transparent 50%);background-size:1px 2px"></div>
<div class="a" style="left:135px;top:482px;width:1px;height:82px;background-image:linear-gradient(#7d7d7d 50%,transparent 50%);background-size:1px 2px"></div>
<div class="a" style="left:116px;top:662px;width:1px;height:280px;background-image:linear-gradient(#7d7d7d 50%,transparent 50%);background-size:1px 2px"></div>
<div class="a" style="left:135px;top:698px;width:1px;height:82px;background-image:linear-gradient(#7d7d7d 50%,transparent 50%);background-size:1px 2px"></div>
<div class="a" style="left:135px;top:806px;width:1px;height:100px;background-image:linear-gradient(#7d7d7d 50%,transparent 50%);background-size:1px 2px"></div>
<div class="a" style="left:83px;top:131px;width:6px;height:1px;background-image:linear-gradient(90deg,#7d7d7d 50%,transparent 50%);background-size:2px 1px"></div>
<svg class="a" style="left:74px;top:127px" width="9" height="9"><use href="#mi"/></svg>
<svg class="a" style="left:89px;top:124px" width="15" height="12"><use href="#fo"/></svg>
<div class="t" style="left:110px;top:124.6px">Doprava</div>
<div class="a" style="left:102px;top:149px;width:6px;height:1px;background-image:linear-gradient(90deg,#7d7d7d 50%,transparent 50%);background-size:2px 1px"></div>
<svg class="a" style="left:93px;top:145px" width="9" height="9"><use href="#pl"/></svg>
<svg class="a" style="left:108px;top:142px" width="15" height="12"><use href="#fo"/></svg>
<div class="t" style="left:129px;top:142.6px">Číselníky - Doprava</div>
<div class="a" style="left:102px;top:167px;width:6px;height:1px;background-image:linear-gradient(90deg,#7d7d7d 50%,transparent 50%);background-size:2px 1px"></div>
<svg class="a" style="left:93px;top:163px" width="9" height="9"><use href="#pl"/></svg>
<svg class="a" style="left:108px;top:160px" width="15" height="12"><use href="#fo"/></svg>
<div class="t" style="left:129px;top:160.6px">Objednávky přijaté na dopravu</div>
<div class="a" style="left:102px;top:185px;width:6px;height:1px;background-image:linear-gradient(90deg,#7d7d7d 50%,transparent 50%);background-size:2px 1px"></div>
<svg class="a" style="left:93px;top:181px" width="9" height="9"><use href="#pl"/></svg>
<svg class="a" style="left:108px;top:178px" width="15" height="12"><use href="#fo"/></svg>
<div class="t" style="left:129px;top:178.6px">Objednávky vydané na dopravu</div>
<div class="a" style="left:102px;top:203px;width:6px;height:1px;background-image:linear-gradient(90deg,#7d7d7d 50%,transparent 50%);background-size:2px 1px"></div>
<svg class="a" style="left:93px;top:199px" width="9" height="9"><use href="#pl"/></svg>
<svg class="a" style="left:108px;top:196px" width="15" height="12"><use href="#fo"/></svg>
<div class="t" style="left:129px;top:196.6px">Výkazy služeb dopravy přijaté</div>
<div class="a" style="left:102px;top:221px;width:6px;height:1px;background-image:linear-gradient(90deg,#7d7d7d 50%,transparent 50%);background-size:2px 1px"></div>
<svg class="a" style="left:93px;top:217px" width="9" height="9"><use href="#pl"/></svg>
<svg class="a" style="left:108px;top:214px" width="15" height="12"><use href="#fo"/></svg>
<div class="t" style="left:129px;top:214.6px">Výkazy služeb dopravy vydané</div>
<div class="a" style="left:102px;top:239px;width:6px;height:1px;background-image:linear-gradient(90deg,#7d7d7d 50%,transparent 50%);background-size:2px 1px"></div>
<svg class="a" style="left:93px;top:235px" width="9" height="9"><use href="#pl"/></svg>
<svg class="a" style="left:108px;top:232px" width="15" height="12"><use href="#fo"/></svg>
<div class="t" style="left:129px;top:232.6px">Evidence zásilek</div>
<div class="a" style="left:102px;top:257px;width:6px;height:1px;background-image:linear-gradient(90deg,#7d7d7d 50%,transparent 50%);background-size:2px 1px"></div>
<svg class="a" style="left:93px;top:253px" width="9" height="9"><use href="#mi"/></svg>
<svg class="a" style="left:108px;top:250px" width="15" height="12"><use href="#fo"/></svg>
<div class="t" style="left:129px;top:250.6px">Silniční doprava</div>
<div class="a" style="left:121px;top:275px;width:6px;height:1px;background-image:linear-gradient(90deg,#7d7d7d 50%,transparent 50%);background-size:2px 1px"></div>
<svg class="a" style="left:112px;top:271px" width="9" height="9"><use href="#pl"/></svg>
<svg class="a" style="left:127px;top:268px" width="15" height="12"><use href="#fo"/></svg>
<div class="t" style="left:148px;top:268.6px">Číselníky - Silniční doprava</div>
<div class="a" style="left:121px;top:293px;width:6px;height:1px;background-image:linear-gradient(90deg,#7d7d7d 50%,transparent 50%);background-size:2px 1px"></div>
<svg class="a" style="left:112px;top:289px" width="9" height="9"><use href="#mi"/></svg>
<svg class="a" style="left:127px;top:286px" width="15" height="12"><use href="#fo"/></svg>
<div class="t" style="left:148px;top:286.6px">Silniční vozidla</div>
<div class="a" style="left:136px;top:311px;width:11px;height:1px;background-image:linear-gradient(90deg,#7d7d7d 50%,transparent 50%);background-size:2px 1px"></div>
<svg class="a" style="left:151px;top:304.5px" width="7" height="12"><use href="#ar"/></svg>
<div class="t" style="left:167px;top:304.6px">Evidovaná silniční vozidla</div>
<div class="a" style="left:136px;top:329px;width:11px;height:1px;background-image:linear-gradient(90deg,#7d7d7d 50%,transparent 50%);background-size:2px 1px"></div>
<svg class="a" style="left:151px;top:322.5px" width="7" height="12"><use href="#ar"/></svg>
<div class="t" style="left:167px;top:322.6px">Sledovaná silniční vozidla</div>
<div class="a" style="left:121px;top:347px;width:6px;height:1px;background-image:linear-gradient(90deg,#7d7d7d 50%,transparent 50%);background-size:2px 1px"></div>
<svg class="a" style="left:112px;top:343px" width="9" height="9"><use href="#mi"/></svg>
<svg class="a" style="left:127px;top:340px" width="15" height="12"><use href="#fo"/></svg>
<div class="t" style="left:148px;top:340.6px">Knihy jízd silničních vozidel</div>
<div class="a" style="left:136px;top:365px;width:11px;height:1px;background-image:linear-gradient(90deg,#7d7d7d 50%,transparent 50%);background-size:2px 1px"></div>
<svg class="a" style="left:151px;top:358.5px" width="7" height="12"><use href="#ar"/></svg>
<div class="t" style="left:167px;top:358.6px">Tvorba knihy jízd silničního vozidla</div>
<div class="a" style="left:136px;top:383px;width:11px;height:1px;background-image:linear-gradient(90deg,#7d7d7d 50%,transparent 50%);background-size:2px 1px"></div>
<svg class="a" style="left:151px;top:376.5px" width="7" height="12"><use href="#ar"/></svg>
<div class="t" style="left:167px;top:376.6px">Seznam knih jízd silničních vozidel</div>
<div class="a" style="left:121px;top:401px;width:6px;height:1px;background-image:linear-gradient(90deg,#7d7d7d 50%,transparent 50%);background-size:2px 1px"></div>
<svg class="a" style="left:112px;top:397px" width="9" height="9"><use href="#mi"/></svg>
<svg class="a" style="left:127px;top:394px" width="15" height="12"><use href="#fo"/></svg>
<div class="t" style="left:148px;top:394.6px">Záznamy o provozu silničních vozidel</div>
<div class="a" style="left:136px;top:419px;width:11px;height:1px;background-image:linear-gradient(90deg,#7d7d7d 50%,transparent 50%);background-size:2px 1px"></div>
<svg class="a" style="left:151px;top:412.5px" width="7" height="12"><use href="#ar"/></svg>
<div class="t" style="left:167px;top:412.6px">Tvorba záznamu o provozu silničního vozidla</div>
<div class="a" style="left:136px;top:437px;width:11px;height:1px;background-image:linear-gradient(90deg,#7d7d7d 50%,transparent 50%);background-size:2px 1px"></div>
<svg class="a" style="left:151px;top:430.5px" width="7" height="12"><use href="#ar"/></svg>
<div class="t" style="left:167px;top:430.6px">Seznam záznamů o provozu silničních vozidel</div>
<div class="a" style="left:136px;top:455px;width:11px;height:1px;background-image:linear-gradient(90deg,#7d7d7d 50%,transparent 50%);background-size:2px 1px"></div>
<svg class="a" style="left:151px;top:448.5px" width="7" height="12"><use href="#ar"/></svg>
<div class="t" style="left:167px;top:448.6px">Akce připojené k záznamům o provozu vozidla</div>
<div class="a" style="left:121px;top:473px;width:6px;height:1px;background-image:linear-gradient(90deg,#7d7d7d 50%,transparent 50%);background-size:2px 1px"></div>
<svg class="a" style="left:112px;top:469px" width="9" height="9"><use href="#mi"/></svg>
<svg class="a" style="left:127px;top:466px" width="15" height="12"><use href="#fo"/></svg>
<div class="t" style="left:148px;top:466.6px">Evidence pneumatik</div>
<div class="a" style="left:136px;top:491px;width:11px;height:1px;background-image:linear-gradient(90deg,#7d7d7d 50%,transparent 50%);background-size:2px 1px"></div>
<svg class="a" style="left:151px;top:484.5px" width="7" height="12"><use href="#ar"/></svg>
<div class="t" style="left:167px;top:484.6px">Stavy pneumatik</div>
<div class="a" style="left:136px;top:509px;width:11px;height:1px;background-image:linear-gradient(90deg,#7d7d7d 50%,transparent 50%);background-size:2px 1px"></div>
<svg class="a" style="left:151px;top:502.5px" width="7" height="12"><use href="#ar"/></svg>
<div class="t" style="left:167px;top:502.6px">Katalog pneumatik</div>
<div class="a" style="left:136px;top:527px;width:11px;height:1px;background-image:linear-gradient(90deg,#7d7d7d 50%,transparent 50%);background-size:2px 1px"></div>
<svg class="a" style="left:151px;top:520.5px" width="7" height="12"><use href="#ar"/></svg>
<div class="t" style="left:167px;top:520.6px">Evidované pneumatiky</div>
<div class="a" style="left:136px;top:545px;width:11px;height:1px;background-image:linear-gradient(90deg,#7d7d7d 50%,transparent 50%);background-size:2px 1px"></div>
<svg class="a" style="left:151px;top:538.5px" width="7" height="12"><use href="#ar"/></svg>
<div class="t" style="left:167px;top:538.6px">Doprava - Pneumatiky - Přehled vozidel</div>
<div class="a" style="left:136px;top:563px;width:11px;height:1px;background-image:linear-gradient(90deg,#7d7d7d 50%,transparent 50%);background-size:2px 1px"></div>
<svg class="a" style="left:151px;top:556.5px" width="7" height="12"><use href="#ar"/></svg>
<div class="t" style="left:167px;top:556.6px">Protokoly o stavu pneumatik</div>
<div class="a" style="left:117px;top:581px;width:11px;height:1px;background-image:linear-gradient(90deg,#7d7d7d 50%,transparent 50%);background-size:2px 1px"></div>
<svg class="a" style="left:132px;top:574.5px" width="7" height="12"><use href="#ar"/></svg>
<div class="t" style="left:148px;top:574.6px">Satelitní sledování vozidel</div>
<div class="a" style="left:102px;top:599px;width:6px;height:1px;background-image:linear-gradient(90deg,#7d7d7d 50%,transparent 50%);background-size:2px 1px"></div>
<svg class="a" style="left:93px;top:595px" width="9" height="9"><use href="#pl"/></svg>
<svg class="a" style="left:108px;top:592px" width="15" height="12"><use href="#fo"/></svg>
<div class="t" style="left:129px;top:592.6px">Kontejnerová přeprava</div>
<div class="a" style="left:102px;top:617px;width:6px;height:1px;background-image:linear-gradient(90deg,#7d7d7d 50%,transparent 50%);background-size:2px 1px"></div>
<svg class="a" style="left:93px;top:613px" width="9" height="9"><use href="#pl"/></svg>
<svg class="a" style="left:108px;top:610px" width="15" height="12"><use href="#fo"/></svg>
<div class="t" style="left:129px;top:610.6px">Tankovací stanice</div>
<div class="a" style="left:102px;top:635px;width:6px;height:1px;background-image:linear-gradient(90deg,#7d7d7d 50%,transparent 50%);background-size:2px 1px"></div>
<svg class="a" style="left:93px;top:631px" width="9" height="9"><use href="#pl"/></svg>
<svg class="a" style="left:108px;top:628px" width="15" height="12"><use href="#fo"/></svg>
<div class="t" style="left:129px;top:628.6px">Importy dat - Doprava</div>
<div class="a" style="left:102px;top:653px;width:6px;height:1px;background-image:linear-gradient(90deg,#7d7d7d 50%,transparent 50%);background-size:2px 1px"></div>
<svg class="a" style="left:93px;top:649px" width="9" height="9"><use href="#mi"/></svg>
<svg class="a" style="left:108px;top:646px" width="15" height="12"><use href="#fo"/></svg>
<div class="t" style="left:129px;top:646.6px">Přehledy - Doprava</div>
<div class="a" style="left:121px;top:671px;width:6px;height:1px;background-image:linear-gradient(90deg,#7d7d7d 50%,transparent 50%);background-size:2px 1px"></div>
<svg class="a" style="left:112px;top:667px" width="9" height="9"><use href="#pl"/></svg>
<svg class="a" style="left:127px;top:664px" width="15" height="12"><use href="#fo"/></svg>
<div class="t" style="left:148px;top:664.6px">Ekonomické přehledy</div>
<div class="a" style="left:121px;top:689px;width:6px;height:1px;background-image:linear-gradient(90deg,#7d7d7d 50%,transparent 50%);background-size:2px 1px"></div>
<svg class="a" style="left:112px;top:685px" width="9" height="9"><use href="#mi"/></svg>
<svg class="a" style="left:127px;top:682px" width="15" height="12"><use href="#fo"/></svg>
<div class="t" style="left:148px;top:682.6px">Provozní přehledy</div>
<div class="a" style="left:136px;top:707px;width:11px;height:1px;background-image:linear-gradient(90deg,#7d7d7d 50%,transparent 50%);background-size:2px 1px"></div>
<svg class="a" style="left:151px;top:700.5px" width="7" height="12"><use href="#ar"/></svg>
<div class="t" style="left:167px;top:700.6px">Evidovaná dopravní zařízení</div>
<div class="a" style="left:136px;top:725px;width:11px;height:1px;background-image:linear-gradient(90deg,#7d7d7d 50%,transparent 50%);background-size:2px 1px"></div>
<svg class="a" style="left:151px;top:718.5px" width="7" height="12"><use href="#ar"/></svg>
<div class="t" style="left:167px;top:718.6px">Přehled provozu dopravních zařízení</div>
<div class="a" style="left:136px;top:743px;width:11px;height:1px;background-image:linear-gradient(90deg,#7d7d7d 50%,transparent 50%);background-size:2px 1px"></div>
<svg class="a" style="left:151px;top:736.5px" width="7" height="12"><use href="#ar"/></svg>
<div class="t" style="left:167px;top:736.6px">Stavy nádrží PHm</div>
<div class="a" style="left:136px;top:761px;width:11px;height:1px;background-image:linear-gradient(90deg,#7d7d7d 50%,transparent 50%);background-size:2px 1px"></div>
<svg class="a" style="left:151px;top:754.5px" width="7" height="12"><use href="#ar"/></svg>
<div class="t" style="left:167px;top:754.6px">Přehled provozu dopravních zařízení (nový)</div>
<div class="a" style="left:136px;top:779px;width:11px;height:1px;background-image:linear-gradient(90deg,#7d7d7d 50%,transparent 50%);background-size:2px 1px"></div>
<svg class="a" style="left:151px;top:772.5px" width="7" height="12"><use href="#ar"/></svg>
<div class="t" style="left:167px;top:772.6px">Kontrola konzistence počítadel provozu</div>
<div class="a" style="left:121px;top:797px;width:6px;height:1px;background-image:linear-gradient(90deg,#7d7d7d 50%,transparent 50%);background-size:2px 1px"></div>
<svg class="a" style="left:112px;top:793px" width="9" height="9"><use href="#mi"/></svg>
<svg class="a" style="left:127px;top:790px" width="15" height="12"><use href="#fo"/></svg>
<div class="t" style="left:148px;top:790.6px">Provozní deníky dopravy</div>
<div class="a" style="left:136px;top:815px;width:11px;height:1px;background-image:linear-gradient(90deg,#7d7d7d 50%,transparent 50%);background-size:2px 1px"></div>
<svg class="a" style="left:151px;top:808.5px" width="7" height="12"><use href="#ar"/></svg>
<div class="t" style="left:167px;top:808.6px">Seznam všech provozních událostí</div>
<div class="a" style="left:136px;top:833px;width:11px;height:1px;background-image:linear-gradient(90deg,#7d7d7d 50%,transparent 50%);background-size:2px 1px"></div>
<svg class="a" style="left:151px;top:826.5px" width="7" height="12"><use href="#ar"/></svg>
<div class="t" style="left:167px;top:826.6px">Seznam všech čerpání PHm</div>
<div class="a" style="left:136px;top:851px;width:11px;height:1px;background-image:linear-gradient(90deg,#7d7d7d 50%,transparent 50%);background-size:2px 1px"></div>
<svg class="a" style="left:151px;top:844.5px" width="7" height="12"><use href="#ar"/></svg>
<div class="t" style="left:167px;top:844.6px">Seznam všech vykazujících osob</div>
<div class="a" style="left:136px;top:869px;width:11px;height:1px;background-image:linear-gradient(90deg,#7d7d7d 50%,transparent 50%);background-size:2px 1px"></div>
<svg class="a" style="left:151px;top:862.5px" width="7" height="12"><use href="#ar"/></svg>
<div class="t" style="left:167px;top:862.6px">Seznam všech mzdových položek dopravy</div>
<div class="a" style="left:136px;top:887px;width:11px;height:1px;background-image:linear-gradient(90deg,#7d7d7d 50%,transparent 50%);background-size:2px 1px"></div>
<svg class="a" style="left:151px;top:880.5px" width="7" height="12"><use href="#ar"/></svg>
<div class="t" style="left:167px;top:880.6px">Výkazy provozních událostí pro tvorbu deníků</div>
<div class="a" style="left:136px;top:905px;width:11px;height:1px;background-image:linear-gradient(90deg,#7d7d7d 50%,transparent 50%);background-size:2px 1px"></div>
<svg class="a" style="left:151px;top:898.5px" width="7" height="12"><use href="#ar"/></svg>
<div class="t" style="left:167px;top:898.6px">Tvorba vnitrofaktur z provozních deníků</div>
<div class="a" style="left:117px;top:923px;width:11px;height:1px;background-image:linear-gradient(90deg,#7d7d7d 50%,transparent 50%);background-size:2px 1px"></div>
<svg class="a" style="left:132px;top:916.5px" width="7" height="12"><use href="#ar"/></svg>
<div class="t" style="left:148px;top:916.6px">Všechny akce dopravy</div>
<div class="a" style="left:117px;top:941px;width:11px;height:1px;background-image:linear-gradient(90deg,#7d7d7d 50%,transparent 50%);background-size:2px 1px"></div>
<svg class="a" style="left:132px;top:934.5px" width="7" height="12"><use href="#ar"/></svg>
<div class="t" style="left:148px;top:934.6px">Zařízení použitá pro realizace akcí dopravy</div>
<div class="a" style="left:83px;top:959px;width:6px;height:1px;background-image:linear-gradient(90deg,#7d7d7d 50%,transparent 50%);background-size:2px 1px"></div>
<svg class="a" style="left:74px;top:955px" width="9" height="9"><use href="#pl"/></svg>
<svg class="a" style="left:89px;top:952px" width="15" height="12"><use href="#fo"/></svg>
<div class="t" style="left:110px;top:952.6px">Personalistika</div>
<div class="a" style="left:83px;top:977px;width:6px;height:1px;background-image:linear-gradient(90deg,#7d7d7d 50%,transparent 50%);background-size:2px 1px"></div>
<svg class="a" style="left:74px;top:973px" width="9" height="9"><use href="#pl"/></svg>
<svg class="a" style="left:89px;top:970px" width="15" height="12"><use href="#fo"/></svg>
<div class="t" style="left:110px;top:970.6px">Mzdy</div>
<div class="a" style="left:83px;top:995px;width:6px;height:1px;background-image:linear-gradient(90deg,#7d7d7d 50%,transparent 50%);background-size:2px 1px"></div>
<svg class="a" style="left:74px;top:991px" width="9" height="9"><use href="#pl"/></svg>
<svg class="a" style="left:89px;top:988px" width="15" height="12"><use href="#fo"/></svg>
<div class="t" style="left:110px;top:988.6px">Majetek</div>
</div>
<div class="a" style="left:472px;top:72px;width:1208px;height:938px;background:#004a98;overflow:hidden">
<svg class="a" style="left:0;top:0" width="1208" height="938" viewBox="472 72 1208 938">
<defs><pattern id="fgp" patternUnits="userSpaceOnUse" x="1495.6" y="71.42" width="8.78" height="8.736"><rect width="8.78" height="8.736" fill="#fff"/><rect x="0.72" y="0.72" width="7.34" height="7.3" fill="#004a98"/></pattern><clipPath id="qclip"><rect x="1356" y="72" width="140" height="139.6"/></clipPath></defs>
<rect x="517.9" y="72" width="1.3" height="938" fill="#fff"/>
<rect x="657.5" y="72" width="1.3" height="938" fill="#fff"/>
<rect x="797.1" y="72" width="1.3" height="938" fill="#fff"/>
<rect x="936.7" y="72" width="1.3" height="938" fill="#fff"/>
<rect x="1076.3" y="72" width="1.3" height="938" fill="#fff"/>
<rect x="1215.9" y="72" width="1.3" height="938" fill="#fff"/>
<rect x="1355.9" y="72" width="1.3" height="938" fill="#fff"/>
<rect x="472" y="210.5" width="1208" height="1.3" fill="#fff"/>
<rect x="472" y="350.2" width="1208" height="1.3" fill="#fff"/>
<rect x="472" y="489.9" width="1208" height="1.3" fill="#fff"/>
<rect x="472" y="629.9" width="1208" height="1.3" fill="#fff"/>
<rect x="472" y="769.6" width="1208" height="1.3" fill="#fff"/>
<rect x="472" y="909.4" width="1208" height="1.3" fill="#fff"/>
<rect x="1678.4" y="72" width="1.6" height="938" fill="#fff"/>
<g clip-path="url(#qclip)">
<circle cx="1426.4" cy="141.3" r="69.4" fill="#fff"/>
<circle cx="1426.2" cy="141.3" r="36.7" fill="#004a98"/>
<rect x="1425.2" y="104" width="1.3" height="75" fill="#e8eef6"/>
<rect x="1389" y="140.9" width="75" height="1.3" fill="#e8eef6"/>
<polygon points="1451,142 1495.4,186.6 1471.8,210.6 1426.6,165" fill="#fff"/>
</g>
<rect x="1494.7" y="72" width="10.35" height="140" fill="url(#fgp)"/>
<rect x="1504.4" y="72" width="35.4" height="139.5" fill="#fff"/>
<rect x="1504.4" y="105.7" width="35.4" height="10.0" fill="url(#fgp)"/>
<rect x="1494.7" y="210.5" width="45.4" height="800" fill="url(#fgp)"/>
<text x="1547.2" y="100.7" textLength="123.2" lengthAdjust="spacingAndGlyphs" font-family="Liberation Sans" font-weight="700" font-size="24.8" fill="#fff">CENTRÁLNÍ</text>
<text x="1547.4" y="123.9" textLength="81.4" lengthAdjust="spacingAndGlyphs" font-family="Liberation Sans" font-weight="700" font-size="24.8" fill="#fff">MOZEK</text>
<text x="1547.6" y="147.7" textLength="67" lengthAdjust="spacingAndGlyphs" font-family="Liberation Sans" font-weight="700" font-size="24.8" fill="#fff">FIRMY</text>
<g transform="translate(1583,260)"><ellipse cx="14" cy="31" rx="10" ry="2" fill="#003a7a" opacity="0.6"/><path d="M4 3 H21 V25 L17 29 H4 Z" fill="#f4f4f4" stroke="#d0d0d0" stroke-width="0.6"/><path d="M17 29 V25 H21 Z" fill="#c9c9c9"/><rect x="0.5" y="8" width="12" height="8" rx="1.5" fill="#b9bcc0"/><path d="M2 10.5 H11 M2 12.5 H11 M2 14.5 H9" stroke="#8b8e93" stroke-width="0.8"/><path d="M6 19 H15 M6 21 H15" stroke="#b0b0b0" stroke-width="0.7"/><rect x="13" y="0.5" width="14" height="8.5" rx="1.5" fill="#2e9bea"/><path d="M16 9 L15.5 11.5 L19 9Z" fill="#2e9bea"/><path d="M15 3 H25 M15 5 H25 M15 7 H23" stroke="#c8e6fb" stroke-width="0.8"/></g>
<text x="1596.6" y="308" font-family="Liberation Sans" font-size="10.7" fill="#fff" text-anchor="middle" textLength="96" lengthAdjust="spacingAndGlyphs">Seznam objednávek</text>
<text x="1596.3" y="321" font-family="Liberation Sans" font-size="10.7" fill="#fff" text-anchor="middle" textLength="99.5" lengthAdjust="spacingAndGlyphs">přijatých na dopravu</text>
<g transform="translate(1600,383)"><ellipse cx="13" cy="29" rx="8" ry="2" fill="#003a7a" opacity="0.6"/><path d="M3 16 H23 C23 22 19 26 13 26 C7 26 3 22 3 16 Z" fill="#efefef"/><ellipse cx="13" cy="16" rx="10" ry="2.2" fill="#fdfdfd" stroke="#d8d8d8" stroke-width="0.5"/><path d="M5 5 L9 15 M21 5 L17 15" stroke="#fff" stroke-width="2.6"/><path d="M5 5 L9 15 M21 5 L17 15" stroke="#d8333b" stroke-width="1" stroke-dasharray="1.5 1.5"/><path d="M9 4 L13 8 L18 2 L18 6 L13 12 L9 8 Z" fill="#e63a3f"/><path d="M10 2.5 L13 5.5 L16.5 1.5" stroke="#fff" stroke-width="1.5" fill="none"/></g>
<text x="1612.5" y="432" font-family="Liberation Sans" font-size="10.7" fill="#fff" text-anchor="middle" textLength="96" lengthAdjust="spacingAndGlyphs">Seznam objednávek</text>
<text x="1611.8" y="445" font-family="Liberation Sans" font-size="10.7" fill="#fff" text-anchor="middle" textLength="97.5" lengthAdjust="spacingAndGlyphs">vydaných na dopr…</text>
</svg>
</div>
<div class="a" style="left:487px;top:116px;width:860px;height:638px;background:#fff"></div>
<div class="a" style="left:487px;top:116px;width:860px;height:27px;background:#e9e9e9;border-top:1px solid #e0e0e0;border-left:1px solid #dedede"></div>
<div class="a" style="left:487px;top:143px;width:860px;height:1px;background:#c9d8ec"></div>
<svg class="a" style="left:493px;top:120px" width="16" height="19" viewBox="0 0 16 19"><path d="M1 1.5 L15 9.8 L1 18 Z" fill="#fff"/><path d="M4.6 14.6 L12 10.2" stroke="#b4b4b4" stroke-width="1.8"/></svg>
<div class="t" style="left:513px;top:125px;font-size:11.5px;font-weight:700;color:#4b4b4b">Evidovaná silniční vozidla</div>
<div class="t sf" style="left:1256px;top:124px;font-size:12.5px;font-weight:700;color:#8c6b3f">9</div>
<svg class="a" style="left:1273px;top:122px" width="64" height="16" viewBox="0 0 64 16" fill="none" stroke="#111"><path d="M1 8.5 H11" stroke-width="1.2"/><rect x="26.5" y="4.5" width="9" height="9" stroke-width="1.2"/><path d="M52 5 l8 8 m0 -8 l-8 8" stroke-width="2.2"/></svg>
<div class="a" style="left:499px;top:172px;width:700px;height:570px;background:#f7fbff;border:1px solid #c3d5f5"></div>
<div class="a" style="left:499px;top:152px;width:53px;height:21px;background:#f7fbff;border:1px solid #c3d5f5;border-bottom:none"></div>
<div class="t" style="left:506.5px;top:157px;color:#333;letter-spacing:-0.3px">Seznam</div>
<div class="a" style="left:512px;top:185px;width:674px;height:544px;background:#f7fbff;border:1px solid #c3d5f5"></div>
<div class="a" style="left:513px;top:186px;width:672px;height:18px;background:linear-gradient(#fbfdff,#edf2fb)"></div>
<div class="hd" style="left:513px;top:186px;width:100.5px;padding-left:2.5px">Identifikace zařízení</div>
<div class="hd" style="left:615px;top:186px;width:75.5px;padding-left:2.5px">Evidenční číslo</div>
<div class="a" style="left:613.5px;top:187px;width:1px;height:16px;background:#dfe8f6"></div>
<svg class="a" style="left:698px;top:192.5px" width="8" height="6"><path d="M0.5 5.5 L4 0.5 L7.5 5.5 Z" fill="#c4c4c4" stroke="#ababab" stroke-width="0.6"/></svg>
<div class="hd" style="left:692px;top:186px;width:107.5px;padding-left:15.5px">Registrační značka</div>
<div class="a" style="left:690.5px;top:187px;width:1px;height:16px;background:#dfe8f6"></div>
<div class="hd" style="left:801px;top:186px;width:74.5px;padding-left:2.5px">Uživatel</div>
<div class="a" style="left:799.5px;top:187px;width:1px;height:16px;background:#dfe8f6"></div>
<div class="hd" style="left:877px;top:186px;width:76.5px;padding-left:2.5px">Datum pořízení</div>
<div class="a" style="left:875.5px;top:187px;width:1px;height:16px;background:#dfe8f6"></div>
<div class="hd" style="left:955px;top:186px;width:63.5px;padding-left:2.5px">Servisované</div>
<div class="a" style="left:953.5px;top:187px;width:1px;height:16px;background:#dfe8f6"></div>
<div class="hd" style="left:1020px;top:186px;width:99.5px;padding-left:2.5px">Evidovat silniční daň</div>
<div class="a" style="left:1018.5px;top:187px;width:1px;height:16px;background:#dfe8f6"></div>
<div class="hd" style="left:1121px;top:186px;width:45.5px;padding-left:2.5px">Kód dr…</div>
<div class="a" style="left:1119.5px;top:187px;width:1px;height:16px;background:#dfe8f6"></div>
<div class="cell" style="left:513px;top:204px;width:100.5px;background:#dfeafd;color:#1a1a1a;padding-left:2px">1A12222</div>
<div class="cell" style="left:615px;top:204px;width:75.5px;background:#dfeafd;color:#1a1a1a;padding-left:2px">1A1 2222</div>
<div class="cell" style="left:692px;top:204px;width:107.5px;background:#dfeafd;color:#1a1a1a;padding-left:2px">1A1 2222</div>
<div class="cell" style="left:801px;top:204px;width:74.5px;background:#dfeafd;color:#1a1a1a;padding-left:2px">Malý František</div>
<div class="cell" style="left:877px;top:204px;width:76.5px;background:#dfeafd;color:#1a1a1a;padding-left:2px">01.05.2015</div>
<div class="cell" style="left:955px;top:204px;width:63.5px;background:#dfeafd"></div>
<svg class="a" style="left:979.55px;top:205.5px" width="13" height="13" viewBox="0 0 13 13"><rect x="0.5" y="0.5" width="12" height="12" fill="#eef3fc" stroke="#b9bec8"/><path d="M3 6.5 L5.5 9.2 L10 3.8" fill="none" stroke="#8e97a6" stroke-width="2.1"/></svg>
<div class="cell" style="left:1020px;top:204px;width:99.5px;background:#dfeafd"></div>
<svg class="a" style="left:1062.55px;top:205.5px" width="13" height="13" viewBox="0 0 13 13"><rect x="0.5" y="0.5" width="12" height="12" fill="#eef3fc" stroke="#b9bec8"/><path d="M3 6.5 L5.5 9.2 L10 3.8" fill="none" stroke="#8e97a6" stroke-width="2.1"/></svg>
<div class="cell" style="left:1121px;top:204px;width:47px;background:#dfeafd;color:#1a1a1a;padding-left:2px">OA</div>
<div class="cell" style="left:513px;top:222px;width:100.5px;background:#cbdcfb;color:#1a1a1a;padding-left:2px">1AB1112</div>
<div class="cell" style="left:615px;top:222px;width:75.5px;background:#cbdcfb;color:#1a1a1a;padding-left:2px">1AB 1112</div>
<div class="cell" style="left:692px;top:222px;width:107.5px;background:#cbdcfb;color:#1a1a1a;padding-left:2px">1AB 1112</div>
<div class="cell" style="left:801px;top:222px;width:74.5px;background:#cbdcfb;color:#1a1a1a;padding-left:2px">Malý František</div>
<div class="cell" style="left:877px;top:222px;width:76.5px;background:#cbdcfb;color:#1a1a1a;padding-left:2px"></div>
<div class="cell" style="left:955px;top:222px;width:63.5px;background:#cbdcfb"></div>
<svg class="a" style="left:979.55px;top:223.5px" width="13" height="13" viewBox="0 0 13 13"><rect x="0.5" y="0.5" width="12" height="12" fill="#eef3fc" stroke="#b9bec8"/><path d="M3 6.5 L5.5 9.2 L10 3.8" fill="none" stroke="#8e97a6" stroke-width="2.1"/></svg>
<div class="cell" style="left:1020px;top:222px;width:99.5px;background:#cbdcfb"></div>
<svg class="a" style="left:1062.55px;top:223.5px" width="13" height="13" viewBox="0 0 13 13"><rect x="0.5" y="0.5" width="12" height="12" fill="#eef3fc" stroke="#b9bec8"/><path d="M3 6.5 L5.5 9.2 L10 3.8" fill="none" stroke="#8e97a6" stroke-width="2.1"/></svg>
<div class="cell" style="left:1121px;top:222px;width:47px;background:#cbdcfb;color:#1a1a1a;padding-left:2px">OA</div>
<div class="cell" style="left:513px;top:240px;width:100.5px;background:#dfeafd;color:#1a1a1a;padding-left:2px">1AB1111</div>
<div class="cell" style="left:615px;top:240px;width:75.5px;background:#dfeafd;color:#1a1a1a;padding-left:2px">1AB1111</div>
<div class="cell" style="left:692px;top:240px;width:107.5px;background:#dfeafd;color:#1a1a1a;padding-left:2px">1AB1111</div>
<div class="cell" style="left:801px;top:240px;width:74.5px;background:#dfeafd;color:#1a1a1a;padding-left:2px">Svoboda Josef</div>
<div class="cell" style="left:877px;top:240px;width:76.5px;background:#dfeafd;color:#1a1a1a;padding-left:2px">18.05.2011</div>
<div class="cell" style="left:955px;top:240px;width:63.5px;background:#dfeafd"></div>
<svg class="a" style="left:979.55px;top:241.5px" width="13" height="13" viewBox="0 0 13 13"><rect x="0.5" y="0.5" width="12" height="12" fill="#eef3fc" stroke="#b9bec8"/><path d="M3 6.5 L5.5 9.2 L10 3.8" fill="none" stroke="#8e97a6" stroke-width="2.1"/></svg>
<div class="cell" style="left:1020px;top:240px;width:99.5px;background:#dfeafd"></div>
<svg class="a" style="left:1062.55px;top:241.5px" width="13" height="13" viewBox="0 0 13 13"><rect x="0.5" y="0.5" width="12" height="12" fill="#eef3fc" stroke="#b9bec8"/><path d="M3 6.5 L5.5 9.2 L10 3.8" fill="none" stroke="#8e97a6" stroke-width="2.1"/></svg>
<div class="cell" style="left:1121px;top:240px;width:47px;background:#dfeafd;color:#1a1a1a;padding-left:2px">OA</div>
<div class="cell" style="left:513px;top:258px;width:100.5px;background:#cbdcfb;color:#1a1a1a;padding-left:2px">2AB2222</div>
<div class="cell" style="left:615px;top:258px;width:75.5px;background:#cbdcfb;color:#1a1a1a;padding-left:2px">2AB2222</div>
<div class="cell" style="left:692px;top:258px;width:107.5px;background:#cbdcfb;color:#1a1a1a;padding-left:2px">2AB2222</div>
<div class="cell" style="left:801px;top:258px;width:74.5px;background:#cbdcfb;color:#1a1a1a;padding-left:2px">Malý František</div>
<div class="cell" style="left:877px;top:258px;width:76.5px;background:#cbdcfb;color:#1a1a1a;padding-left:2px"></div>
<div class="cell" style="left:955px;top:258px;width:63.5px;background:#cbdcfb"></div>
<svg class="a" style="left:979.55px;top:259.5px" width="13" height="13" viewBox="0 0 13 13"><rect x="0.5" y="0.5" width="12" height="12" fill="#eef3fc" stroke="#b9bec8"/><path d="M3 6.5 L5.5 9.2 L10 3.8" fill="none" stroke="#8e97a6" stroke-width="2.1"/></svg>
<div class="cell" style="left:1020px;top:258px;width:99.5px;background:#cbdcfb"></div>
<svg class="a" style="left:1062.55px;top:259.5px" width="13" height="13" viewBox="0 0 13 13"><rect x="0.5" y="0.5" width="12" height="12" fill="#eef3fc" stroke="#b9bec8"/><path d="M3 6.5 L5.5 9.2 L10 3.8" fill="none" stroke="#8e97a6" stroke-width="2.1"/></svg>
<div class="cell" style="left:1121px;top:258px;width:47px;background:#cbdcfb;color:#1a1a1a;padding-left:2px">NAV</div>
<div class="cell" style="left:513px;top:276px;width:100.5px;background:#03466e;color:#fff;padding-left:2px">2B95241</div>
<div class="cell" style="left:615px;top:276px;width:75.5px;background:#03466e;color:#fff;padding-left:2px">2B95241</div>
<div class="cell" style="left:692px;top:276px;width:107.5px;background:#03466e;color:#fff;padding-left:2px">2B95241</div>
<div class="cell" style="left:801px;top:276px;width:74.5px;background:#03466e;color:#fff;padding-left:2px"></div>
<div class="cell" style="left:877px;top:276px;width:76.5px;background:#03466e;color:#fff;padding-left:2px">01.06.2017</div>
<div class="cell" style="left:955px;top:276px;width:63.5px;background:#03466e"></div>
<svg class="a" style="left:979.55px;top:277.5px" width="13" height="13" viewBox="0 0 13 13"><rect x="0.5" y="0.5" width="12" height="12" fill="#7896aa" stroke="#8aa5b7"/><path d="M3 6.5 L5.5 9.2 L10 3.8" fill="none" stroke="#1d4a68" stroke-width="2.1"/></svg>
<div class="cell" style="left:1020px;top:276px;width:99.5px;background:#03466e"></div>
<svg class="a" style="left:1062.55px;top:277.5px" width="13" height="13" viewBox="0 0 13 13"><rect x="0.5" y="0.5" width="12" height="12" fill="#7896aa" stroke="#8aa5b7"/><rect x="4" y="4" width="5" height="5" fill="#1d4a68"/></svg>
<div class="cell" style="left:1121px;top:276px;width:47px;background:#03466e;color:#fff;padding-left:2px">OA</div>
<div class="cell" style="left:513px;top:294px;width:100.5px;background:#cbdcfb;color:#1a1a1a;padding-left:2px">3AB3333</div>
<div class="cell" style="left:615px;top:294px;width:75.5px;background:#cbdcfb;color:#1a1a1a;padding-left:2px">3AB3333</div>
<div class="cell" style="left:692px;top:294px;width:107.5px;background:#cbdcfb;color:#1a1a1a;padding-left:2px">3AB3333</div>
<div class="cell" style="left:801px;top:294px;width:74.5px;background:#cbdcfb;color:#1a1a1a;padding-left:2px">Malý František</div>
<div class="cell" style="left:877px;top:294px;width:76.5px;background:#cbdcfb;color:#1a1a1a;padding-left:2px"></div>
<div class="cell" style="left:955px;top:294px;width:63.5px;background:#cbdcfb"></div>
<svg class="a" style="left:979.55px;top:295.5px" width="13" height="13" viewBox="0 0 13 13"><rect x="0.5" y="0.5" width="12" height="12" fill="#eef3fc" stroke="#b9bec8"/><path d="M3 6.5 L5.5 9.2 L10 3.8" fill="none" stroke="#8e97a6" stroke-width="2.1"/></svg>
<div class="cell" style="left:1020px;top:294px;width:99.5px;background:#cbdcfb"></div>
<svg class="a" style="left:1062.55px;top:295.5px" width="13" height="13" viewBox="0 0 13 13"><rect x="0.5" y="0.5" width="12" height="12" fill="#eef3fc" stroke="#b9bec8"/><rect x="4" y="4" width="5" height="5" fill="#8e97a6"/></svg>
<div class="cell" style="left:1121px;top:294px;width:47px;background:#cbdcfb;color:#1a1a1a;padding-left:2px"></div>
<div class="cell" style="left:513px;top:312px;width:100.5px;background:#dfeafd;color:#1a1a1a;padding-left:2px">3AB4444</div>
<div class="cell" style="left:615px;top:312px;width:75.5px;background:#dfeafd;color:#1a1a1a;padding-left:2px">3AB4444</div>
<div class="cell" style="left:692px;top:312px;width:107.5px;background:#dfeafd;color:#1a1a1a;padding-left:2px">3AB4444</div>
<div class="cell" style="left:801px;top:312px;width:74.5px;background:#dfeafd;color:#1a1a1a;padding-left:2px"></div>
<div class="cell" style="left:877px;top:312px;width:76.5px;background:#dfeafd;color:#1a1a1a;padding-left:2px"></div>
<div class="cell" style="left:955px;top:312px;width:63.5px;background:#dfeafd"></div>
<svg class="a" style="left:979.55px;top:313.5px" width="13" height="13" viewBox="0 0 13 13"><rect x="0.5" y="0.5" width="12" height="12" fill="#eef3fc" stroke="#b9bec8"/><path d="M3 6.5 L5.5 9.2 L10 3.8" fill="none" stroke="#8e97a6" stroke-width="2.1"/></svg>
<div class="cell" style="left:1020px;top:312px;width:99.5px;background:#dfeafd"></div>
<svg class="a" style="left:1062.55px;top:313.5px" width="13" height="13" viewBox="0 0 13 13"><rect x="0.5" y="0.5" width="12" height="12" fill="#eef3fc" stroke="#b9bec8"/><rect x="4" y="4" width="5" height="5" fill="#8e97a6"/></svg>
<div class="cell" style="left:1121px;top:312px;width:47px;background:#dfeafd;color:#1a1a1a;padding-left:2px"></div>
<div class="cell" style="left:513px;top:330px;width:100.5px;background:#cbdcfb;color:#1a1a1a;padding-left:2px">1111111</div>
<div class="cell" style="left:615px;top:330px;width:75.5px;background:#cbdcfb;color:#1a1a1a;padding-left:2px">1111111</div>
<div class="cell" style="left:692px;top:330px;width:107.5px;background:#cbdcfb;color:#1a1a1a;padding-left:2px">1111111</div>
<div class="cell" style="left:801px;top:330px;width:74.5px;background:#cbdcfb;color:#1a1a1a;padding-left:2px"></div>
<div class="cell" style="left:877px;top:330px;width:76.5px;background:#cbdcfb;color:#1a1a1a;padding-left:2px"></div>
<div class="cell" style="left:955px;top:330px;width:63.5px;background:#cbdcfb"></div>
<svg class="a" style="left:979.55px;top:331.5px" width="13" height="13" viewBox="0 0 13 13"><rect x="0.5" y="0.5" width="12" height="12" fill="#eef3fc" stroke="#b9bec8"/><path d="M3 6.5 L5.5 9.2 L10 3.8" fill="none" stroke="#8e97a6" stroke-width="2.1"/></svg>
<div class="cell" style="left:1020px;top:330px;width:99.5px;background:#cbdcfb"></div>
<svg class="a" style="left:1062.55px;top:331.5px" width="13" height="13" viewBox="0 0 13 13"><rect x="0.5" y="0.5" width="12" height="12" fill="#eef3fc" stroke="#b9bec8"/><rect x="4" y="4" width="5" height="5" fill="#8e97a6"/></svg>
<div class="cell" style="left:1121px;top:330px;width:47px;background:#cbdcfb;color:#1a1a1a;padding-left:2px"></div>
<div class="cell" style="left:513px;top:348px;width:100.5px;background:#dfeafd;color:#1a1a1a;padding-left:2px">A002</div>
<div class="cell" style="left:615px;top:348px;width:75.5px;background:#dfeafd;color:#1a1a1a;padding-left:2px">A002</div>
<div class="cell" style="left:692px;top:348px;width:107.5px;background:#dfeafd;color:#1a1a1a;padding-left:2px">A002</div>
<div class="cell" style="left:801px;top:348px;width:74.5px;background:#dfeafd;color:#1a1a1a;padding-left:2px"></div>
<div class="cell" style="left:877px;top:348px;width:76.5px;background:#dfeafd;color:#1a1a1a;padding-left:2px"></div>
<div class="cell" style="left:955px;top:348px;width:63.5px;background:#dfeafd"></div>
<svg class="a" style="left:979.55px;top:349.5px" width="13" height="13" viewBox="0 0 13 13"><rect x="0.5" y="0.5" width="12" height="12" fill="#eef3fc" stroke="#b9bec8"/><path d="M3 6.5 L5.5 9.2 L10 3.8" fill="none" stroke="#8e97a6" stroke-width="2.1"/></svg>
<div class="cell" style="left:1020px;top:348px;width:99.5px;background:#dfeafd"></div>
<svg class="a" style="left:1062.55px;top:349.5px" width="13" height="13" viewBox="0 0 13 13"><rect x="0.5" y="0.5" width="12" height="12" fill="#eef3fc" stroke="#b9bec8"/><rect x="4" y="4" width="5" height="5" fill="#8e97a6"/></svg>
<div class="cell" style="left:1121px;top:348px;width:47px;background:#dfeafd;color:#1a1a1a;padding-left:2px"></div>
<div class="a" style="left:1168px;top:204px;width:17px;height:506px;background:#f1f5fa"></div>
<svg class="a" style="left:1171.0px;top:190.2px" width="11" height="8" viewBox="0 0 11 8"><path d="M2.2 6.3 L5.5 2.8 L8.8 6.3" fill="none" stroke="#111" stroke-width="2.0"/></svg>
<div class="a" style="left:513px;top:711px;width:655px;height:17px;background:#f1f5fa"></div>
<div class="a" style="left:530px;top:711px;width:30px;height:17px;background:#d5e3f3"></div>
<svg class="a" style="left:517px;top:714.0px" width="8" height="11" viewBox="0 0 8 11"><path d="M5.8 2.2 L2.3 5.5 L5.8 8.8" fill="none" stroke="#111" stroke-width="1.8"/></svg>
<div class="btn" style="left:1207px;top:172px;width:128px">Karta zařízení</div>
<div class="btn" style="left:1207px;top:200px;width:128px">Vložení vozidla</div>
<div class="btn dis" style="left:1207px;top:228px;width:128px">Kopie vozidla</div>
<div class="btn dis" style="left:1207px;top:256px;width:128px">Smazat vozidlo</div>
<div class="btn" style="left:1207px;top:296px;width:128px">Procesy a činnosti<i></i></div>
<div class="a" style="left:538px;top:312px;width:945px;height:525px;background:#fff;border-left:1px solid #cbcbcb"></div>
<div class="a" style="left:538px;top:312px;width:945px;height:27px;background:#e9e9e9;border-top:1px solid #d6d6d6;border-left:1px solid #d2d2d2"></div>
<div class="a" style="left:539px;top:339px;width:944px;height:1px;background:#c9d8ec"></div>
<svg class="a" style="left:544px;top:316.3px" width="16" height="19" viewBox="0 0 16 19"><path d="M1 1.5 L15 9.8 L1 18 Z" fill="#fff"/><path d="M4.6 14.6 L12 10.2" stroke="#b4b4b4" stroke-width="1.8"/></svg>
<div class="t" style="left:564px;top:321px;font-size:11.5px;font-weight:700;color:#4b4b4b">Karta silničního vozidla</div>
<div class="t sf" style="left:1391.5px;top:320.5px;font-size:12.5px;font-weight:700;color:#8c6b3f">1</div>
<svg class="a" style="left:1409px;top:318.5px" width="64" height="16" viewBox="0 0 64 16" fill="none" stroke="#111"><path d="M1 8.5 H11" stroke-width="1.2"/><rect x="26.5" y="4.5" width="9" height="9" stroke-width="1.2"/><path d="M52 5 l8 8 m0 -8 l-8 8" stroke-width="2.2"/></svg>
<div class="a" style="left:550px;top:368px;width:785px;height:455px;background:#f7fbff;border:1px solid #c3d5f5"></div>
<div class="a" style="left:550px;top:348px;width:91px;height:21px;background:#f7fbff;border:1px solid #c3d5f5;border-bottom:none"></div>
<div class="t" style="left:557.3px;top:352.6px;color:#333">Evidenční údaje</div>
<div class="t" style="left:644.7px;top:353px;color:#333">Technické parametry</div>
<div class="t" style="left:756.5px;top:353px;color:#333">Sledování provozu</div>
<div class="t" style="left:856.3px;top:353px;color:#333">Účetnictví</div>
<div class="t" style="left:915.2px;top:353px;color:#333">Umístění zařízení</div>
<div class="lbl" style="left:561px;top:390px;width:239px;overflow:hidden">Evidenční číslo <span style="letter-spacing:-0.15px;font-weight:700;color:#222"> . . . . . . . . . . . . . . . . . . . . . . . . . . . . . . . . . . . . . . . . . . . . . . . . . . . . . . . . . . . .</span></div>
<div class="fld" style="left:813px;top:381px;width:509px;background:#deffb4;border-color:#c9e5a8">2B95241</div>
<div class="lbl" style="left:561px;top:414px;width:239px;overflow:hidden">Název vozidla <span style="letter-spacing:-0.15px;font-weight:700;color:#222"> . . . . . . . . . . . . . . . . . . . . . . . . . . . . . . . . . . . . . . . . . . . . . . . . . . . . . . . . . . . .</span></div>
<div class="fld" style="left:813px;top:405px;width:509px;background:#deffb4;border-color:#c9e5a8">Seat Ibiza</div>
<div class="lbl" style="left:561px;top:438px;width:239px;overflow:hidden">Registrační značka <span style="letter-spacing:-0.15px;font-weight:700;color:#222"> . . . . . . . . . . . . . . . . . . . . . . . . . . . . . . . . . . . . . . . . . . . . . . . . . . . . . . . . . . . .</span></div>
<div class="fld" style="left:813px;top:429px;width:509px;background:#fff;border-color:#c3d5f5">2B95241</div>
<div class="lbl" style="left:561px;top:462px;width:239px;overflow:hidden">Identifikace zařízení <span style="letter-spacing:-0.15px;font-weight:700;color:#222"> . . . . . . . . . . . . . . . . . . . . . . . . . . . . . . . . . . . . . . . . . . . . . . . . . . . . . . . . . . . .</span></div>
<div class="fld" style="left:813px;top:453px;width:509px;background:#dfeafd;border-color:#c3d5f5">2B95241</div>
<div class="lbl" style="left:561px;top:486px;width:239px;overflow:hidden">Katalogový kód vozidla <span style="letter-spacing:-0.15px;font-weight:700;color:#222"> . . . . . . . . . . . . . . . . . . . . . . . . . . . . . . . . . . . . . . . . . . . . . . . . . . . . . . . . . . . .</span></div>
<div class="fld" style="left:813px;top:477px;width:509px;background:#fff;border-color:#c3d5f5"></div>
<div class="a" style="left:1304px;top:479px;width:17px;height:15px;background:#fafcff"></div>
<div class="a" style="left:1308px;top:486px;width:2px;height:2px;background:#111;box-shadow:4px 0 0 #111,8px 0 0 #111"></div>
<div class="lbl" style="left:561px;top:510px;width:239px;overflow:hidden">Katalogový název vozidla <span style="letter-spacing:-0.15px;font-weight:700;color:#222"> . . . . . . . . . . . . . . . . . . . . . . . . . . . . . . . . . . . . . . . . . . . . . . . . . . . . . . . . . . . .</span></div>
<div class="fld" style="left:813px;top:501px;width:509px;background:#fff;border-color:#c3d5f5"></div>
<div class="a" style="left:1304px;top:503px;width:17px;height:15px;background:#fafcff"></div>
<div class="a" style="left:1308px;top:510px;width:2px;height:2px;background:#111;box-shadow:4px 0 0 #111,8px 0 0 #111"></div>
<div class="lbl" style="left:561px;top:534px;width:239px;overflow:hidden">Kód druhu <span style="letter-spacing:-0.15px;font-weight:700;color:#222"> . . . . . . . . . . . . . . . . . . . . . . . . . . . . . . . . . . . . . . . . . . . . . . . . . . . . . . . . . . . .</span></div>
<div class="fld" style="left:813px;top:525px;width:509px;background:#fff;border-color:#c3d5f5">OA</div>
<div class="a" style="left:1304px;top:527px;width:17px;height:15px;background:#fafcff"></div>
<div class="a" style="left:1308px;top:534px;width:2px;height:2px;background:#111;box-shadow:4px 0 0 #111,8px 0 0 #111"></div>
<div class="lbl" style="left:561px;top:558px;width:239px;overflow:hidden">Název druhu <span style="letter-spacing:-0.15px;font-weight:700;color:#222"> . . . . . . . . . . . . . . . . . . . . . . . . . . . . . . . . . . . . . . . . . . . . . . . . . . . . . . . . . . . .</span></div>
<div class="fld" style="left:813px;top:549px;width:509px;background:#fff;border-color:#c3d5f5">Osobní automobil</div>
<div class="a" style="left:1304px;top:551px;width:17px;height:15px;background:#fafcff"></div>
<div class="a" style="left:1308px;top:558px;width:2px;height:2px;background:#111;box-shadow:4px 0 0 #111,8px 0 0 #111"></div>
<div class="lbl" style="left:561px;top:582px;width:239px;overflow:hidden">Kategorie vozidla <span style="letter-spacing:-0.15px;font-weight:700;color:#222"> . . . . . . . . . . . . . . . . . . . . . . . . . . . . . . . . . . . . . . . . . . . . . . . . . . . . . . . . . . . .</span></div>
<div class="fld" style="left:813px;top:573px;width:509px;background:#fff;border-color:#c3d5f5">M1</div>
<div class="a" style="left:1304px;top:575px;width:17px;height:15px;background:#fafcff"></div>
<div class="a" style="left:1308px;top:582px;width:2px;height:2px;background:#111;box-shadow:4px 0 0 #111,8px 0 0 #111"></div>
<div class="lbl" style="left:561px;top:606px;width:239px;overflow:hidden">Identifikační číslo vozidla (VIN) <span style="letter-spacing:-0.15px;font-weight:700;color:#222"> . . . . . . . . . . . . . . . . . . . . . . . . . . . . . . . . . . . . . . . . . . . . . . . . . . . . . . . . . . . .</span></div>
<div class="fld" style="left:813px;top:597px;width:509px;background:#fff;border-color:#c3d5f5">5454FGE65968FEE</div>
<div class="lbl" style="left:561px;top:630px;width:239px;overflow:hidden">Datum pořízení <span style="letter-spacing:-0.15px;font-weight:700;color:#222"> . . . . . . . . . . . . . . . . . . . . . . . . . . . . . . . . . . . . . . . . . . . . . . . . . . . . . . . . . . . .</span></div>
<div class="fld" style="left:813px;top:621px;width:509px;background:#fff;border-color:#c3d5f5">01.06.2017</div>
<div class="a" style="left:1304px;top:623px;width:17px;height:15px;background:#fafcff"></div>
<svg class="a" style="left:1306.8px;top:627px" width="11" height="8" viewBox="0 0 11 8"><path d="M2.2 2 L5.5 5.5 L8.8 2" fill="none" stroke="#111" stroke-width="2.0"/></svg>
<div class="lbl" style="left:561px;top:654px;width:239px;overflow:hidden">Datum vyřazení <span style="letter-spacing:-0.15px;font-weight:700;color:#222"> . . . . . . . . . . . . . . . . . . . . . . . . . . . . . . . . . . . . . . . . . . . . . . . . . . . . . . . . . . . .</span></div>
<div class="fld" style="left:813px;top:645px;width:509px;background:#fff;border-color:#c3d5f5"></div>
<div class="a" style="left:1304px;top:647px;width:17px;height:15px;background:#fafcff"></div>
<svg class="a" style="left:1306.8px;top:651px" width="11" height="8" viewBox="0 0 11 8"><path d="M2.2 2 L5.5 5.5 L8.8 2" fill="none" stroke="#111" stroke-width="2.0"/></svg>
<div class="fld" style="left:813px;top:669px;width:509px;background:#fff;border-color:#c3d5f5"></div>
<div class="a" style="left:1304px;top:671px;width:17px;height:15px;background:#fafcff"></div>
<svg class="a" style="left:1306.8px;top:675px" width="11" height="8" viewBox="0 0 11 8"><path d="M2.2 2 L5.5 5.5 L8.8 2" fill="none" stroke="#111" stroke-width="2.0"/></svg>
<div class="fld" style="left:813px;top:693px;width:509px;background:#fff;border-color:#c3d5f5"></div>
<div class="a" style="left:1304px;top:695px;width:17px;height:15px;background:#fafcff"></div>
<svg class="a" style="left:1306.8px;top:699px" width="11" height="8" viewBox="0 0 11 8"><path d="M2.2 2 L5.5 5.5 L8.8 2" fill="none" stroke="#111" stroke-width="2.0"/></svg>
<div class="fld" style="left:813px;top:717px;width:509px;background:#fff;border-color:#c3d5f5"></div>
<div class="a" style="left:1304px;top:719px;width:17px;height:15px;background:#fafcff"></div>
<svg class="a" style="left:1306.8px;top:723px" width="11" height="8" viewBox="0 0 11 8"><path d="M2.2 2 L5.5 5.5 L8.8 2" fill="none" stroke="#111" stroke-width="2.0"/></svg>
<div class="fld" style="left:813px;top:741px;width:509px;background:#fff;border-color:#c3d5f5"></div>
<div class="a" style="left:1304px;top:743px;width:17px;height:15px;background:#fafcff"></div>
<svg class="a" style="left:1306.8px;top:747px" width="11" height="8" viewBox="0 0 11 8"><path d="M2.2 2 L5.5 5.5 L8.8 2" fill="none" stroke="#111" stroke-width="2.0"/></svg>
<div class="btn" style="left:1343px;top:368px;width:128px">Registrační značky</div>
<div class="btn dis" style="left:1343px;top:396px;width:128px">Sledování provozu<i></i></div>
<div class="btn" style="left:1343px;top:424px;width:128px">Součásti vozidla<i></i></div>
<div class="btn" style="left:1343px;top:452px;width:128px">Vztahy k subjektům<i></i></div>
<div class="btn" style="left:1343px;top:480px;width:128px">Dokumentace<i></i></div>
<div class="btn dis" style="left:1343px;top:508px;width:128px">Jízdní soupravy<i></i></div>
<div class="btn" style="left:1343px;top:536px;width:128px">Procesy a činnosti<i></i></div>
<div class="btn" style="left:1343px;top:564px;width:128px">Tankovací karty</div>
<div class="btn" style="left:1343px;top:592px;width:128px">Zařazení do skupiny</div>
<div class="btn" style="left:1343px;top:620px;width:128px">Mzdové systémy</div>
<div class="btn" style="left:1343px;top:660px;width:128px">Provozní přehledy<i></i></div>
<div class="btn" style="left:1343px;top:688px;width:128px">Servis a údržba<i></i></div>
<div class="btn" style="left:1343px;top:716px;width:128px">Majetek<i></i></div>
<div class="btn" style="left:1343px;top:744px;width:128px">Silniční daň</div>
<div class="btn dis" style="left:1343px;top:772px;width:128px">Sklady<i></i></div>
<div class="btn" style="left:1343px;top:800px;width:128px">Parametry vozidla</div>
<div class="a" style="left:556px;top:669px;width:725px;height:309px;background:#fff;border:1px solid #3f6f9c;border-top:none"></div>
<div class="a" style="left:556px;top:669px;width:725px;height:28px;background:#1c4566"></div>
<svg class="a" style="left:562px;top:673.3px" width="16" height="19" viewBox="0 0 16 19"><path d="M1 1.5 L15 9.8 L1 18 Z" fill="#fff"/><path d="M4.6 14.6 L12 10.2" stroke="#c4c4c4" stroke-width="1.8"/></svg>
<div class="t" style="left:582px;top:678px;font-size:11.5px;font-weight:700;color:#fff">Seznam provozních deníků</div>
<div class="t sf" style="left:1189.5px;top:678px;font-size:12.5px;font-weight:700;color:#fff">4</div>
<svg class="a" style="left:1207px;top:676px" width="64" height="16" viewBox="0 0 64 16" fill="none" stroke="#fff"><path d="M1 8.5 H11" stroke-width="1.2"/><rect x="26.5" y="4.5" width="9" height="9" stroke-width="1.2"/><path d="M52 5 l8 8 m0 -8 l-8 8" stroke-width="1.3"/></svg>
<div class="a" style="left:569px;top:706px;width:563px;height:260px;background:#f7fbff;border:1px solid #c3d5f5"></div>
<div class="a" style="left:570px;top:707px;width:561px;height:18px;background:linear-gradient(#fbfdff,#edf2fb)"></div>
<div class="hd" style="left:570px;top:707px;width:122.5px;padding-left:2.5px">Evidenční číslo dokladu</div>
<div class="hd" style="left:694px;top:707px;width:119.5px;padding-left:2.5px">Počáteční stav počitadla</div>
<div class="a" style="left:692.5px;top:708px;width:1px;height:16px;background:#dfe8f6"></div>
<div class="hd" style="left:815px;top:707px;width:64.5px;padding-left:2.5px;letter-spacing:-0.32px">Čerpání PHm</div>
<div class="a" style="left:813.5px;top:708px;width:1px;height:16px;background:#dfe8f6"></div>
<div class="hd" style="left:881px;top:707px;width:71.5px;padding-left:2.5px;letter-spacing:-0.32px">Spotřeba PHm</div>
<div class="a" style="left:879.5px;top:708px;width:1px;height:16px;background:#dfe8f6"></div>
<div class="hd" style="left:954px;top:707px;width:114.5px;padding-left:2.5px">Konečný stav počitadla</div>
<div class="a" style="left:952.5px;top:708px;width:1px;height:16px;background:#dfe8f6"></div>
<div class="hd" style="left:1070px;top:707px;width:43.0px;padding-left:2.5px">Identi…</div>
<div class="a" style="left:1068.5px;top:708px;width:1px;height:16px;background:#dfe8f6"></div>
<div class="cell" style="left:570px;top:725px;width:122.5px;background:#03466e;color:#fff;padding-left:2px">ZPVV-2017-000001</div>
<div class="cell" style="left:694px;top:725px;width:119.5px;background:#03466e;color:#fff;text-align:right;padding-right:2.5px">120 219</div>
<div class="cell" style="left:815px;top:725px;width:64.5px;background:#03466e;color:#fff;text-align:right;padding-right:2.5px"></div>
<div class="cell" style="left:881px;top:725px;width:71.5px;background:#03466e;color:#fff;text-align:right;padding-right:2.5px"></div>
<div class="cell" style="left:954px;top:725px;width:114.5px;background:#03466e;color:#fff;text-align:right;padding-right:2.5px">120 804</div>
<div class="cell" style="left:1070px;top:725px;width:44.5px;background:#03466e;color:#fff;padding-left:2px">2B95241</div>
<div class="cell" style="left:570px;top:743px;width:122.5px;background:#cbdcfb;color:#1a1a1a;padding-left:2px">ZPVV-2017-000002</div>
<div class="cell" style="left:694px;top:743px;width:119.5px;background:#cbdcfb;color:#1a1a1a;text-align:right;padding-right:2.5px">120 804</div>
<div class="cell" style="left:815px;top:743px;width:64.5px;background:#cbdcfb;color:#1a1a1a;text-align:right;padding-right:2.5px"></div>
<div class="cell" style="left:881px;top:743px;width:71.5px;background:#cbdcfb;color:#1a1a1a;text-align:right;padding-right:2.5px"></div>
<div class="cell" style="left:954px;top:743px;width:114.5px;background:#cbdcfb;color:#1a1a1a;text-align:right;padding-right:2.5px">120 971</div>
<div class="cell" style="left:1070px;top:743px;width:44.5px;background:#cbdcfb;color:#1a1a1a;padding-left:2px">2B95241</div>
<div class="cell" style="left:570px;top:761px;width:122.5px;background:#dfeafd;color:#1a1a1a;padding-left:2px">ZPVV-2017-000003</div>
<div class="cell" style="left:694px;top:761px;width:119.5px;background:#dfeafd;color:#1a1a1a;text-align:right;padding-right:2.5px">120 971</div>
<div class="cell" style="left:815px;top:761px;width:64.5px;background:#dfeafd;color:#1a1a1a;text-align:right;padding-right:2.5px"></div>
<div class="cell" style="left:881px;top:761px;width:71.5px;background:#dfeafd;color:#1a1a1a;text-align:right;padding-right:2.5px"></div>
<div class="cell" style="left:954px;top:761px;width:114.5px;background:#dfeafd;color:#1a1a1a;text-align:right;padding-right:2.5px">120 981</div>
<div class="cell" style="left:1070px;top:761px;width:44.5px;background:#dfeafd;color:#1a1a1a;padding-left:2px">2B95241</div>
<div class="cell" style="left:570px;top:779px;width:122.5px;background:#cbdcfb;color:#1a1a1a;padding-left:2px">ZPVV-2017-000004</div>
<div class="cell" style="left:694px;top:779px;width:119.5px;background:#cbdcfb;color:#1a1a1a;text-align:right;padding-right:2.5px">120 981</div>
<div class="cell" style="left:815px;top:779px;width:64.5px;background:#cbdcfb;color:#1a1a1a;text-align:right;padding-right:2.5px">35,00</div>
<div class="cell" style="left:881px;top:779px;width:71.5px;background:#cbdcfb;color:#1a1a1a;text-align:right;padding-right:2.5px">24,57</div>
<div class="cell" style="left:954px;top:779px;width:114.5px;background:#cbdcfb;color:#1a1a1a;text-align:right;padding-right:2.5px">121 389</div>
<div class="cell" style="left:1070px;top:779px;width:44.5px;background:#cbdcfb;color:#1a1a1a;padding-left:2px">2B95241</div>
<div class="a" style="left:570px;top:725px;width:123px;height:18px;border:1px solid #e0203c"></div>
<div class="a" style="left:1114.5px;top:725px;width:16.5px;height:223px;background:#f1f5fa"></div>
<div class="a" style="left:1114.5px;top:725px;width:16.5px;height:116px;background:#d5e3f3"></div>
<svg class="a" style="left:1117.0px;top:711.5px" width="11" height="8" viewBox="0 0 11 8"><path d="M2.2 6.3 L5.5 2.8 L8.8 6.3" fill="none" stroke="#111" stroke-width="2.0"/></svg>
<svg class="a" style="left:1117.0px;top:935.5px" width="11" height="8" viewBox="0 0 11 8"><path d="M2.2 2 L5.5 5.5 L8.8 2" fill="none" stroke="#111" stroke-width="2.0"/></svg>
<div class="a" style="left:570px;top:948px;width:544px;height:17px;background:#f1f5fa"></div>
<div class="a" style="left:587.5px;top:948px;width:16.5px;height:17px;background:#d5e3f3"></div>
<svg class="a" style="left:574.5px;top:951.0px" width="8" height="11" viewBox="0 0 8 11"><path d="M5.8 2.2 L2.3 5.5 L5.8 8.8" fill="none" stroke="#111" stroke-width="1.8"/></svg>
<svg class="a" style="left:1102px;top:951.0px" width="8" height="11" viewBox="0 0 8 11"><path d="M2.2 2.2 L5.7 5.5 L2.2 8.8" fill="none" stroke="#111" stroke-width="1.8"/></svg>
<div class="btn" style="left:1141px;top:705px;width:128px">Zobrazení dokladu</div>
<div class="btn" style="left:1141px;top:733px;width:128px">Čerpání PHm</div>
<div class="btn" style="left:1141px;top:945px;width:128px">Tisk</div>
</body></html>
